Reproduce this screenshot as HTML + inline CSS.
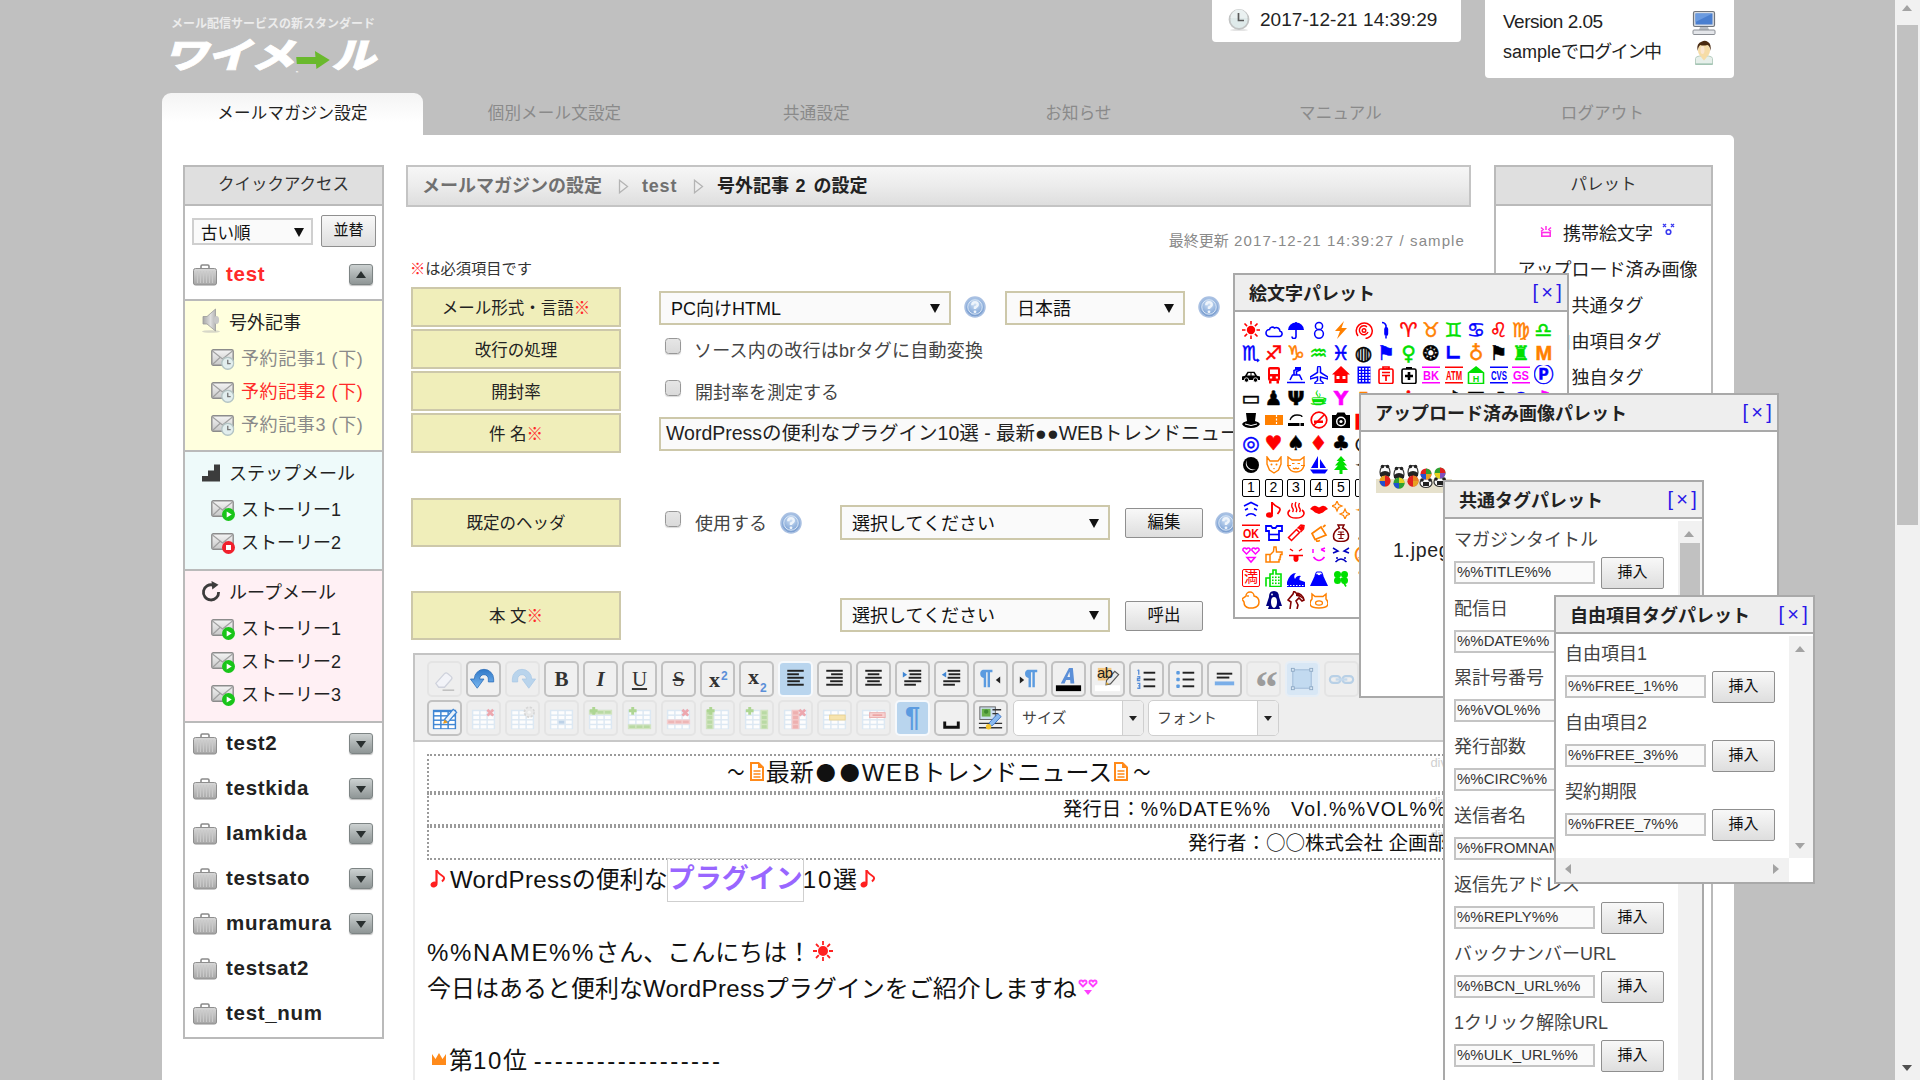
<!DOCTYPE html>
<html lang="ja">
<head>
<meta charset="utf-8">
<title>ワイメール - 号外記事 2 の設定</title>
<style>
*{box-sizing:border-box;margin:0;padding:0}
html,body{width:1920px;height:1080px;overflow:hidden}
body{background:#c0c0c0;font-family:"Liberation Sans","Noto Sans CJK JP",sans-serif;font-size:18px;color:#222;position:relative}
.abs{position:absolute}
.nw{white-space:nowrap}
/* header */
#tagline{left:171px;top:14px;font-size:12px;font-weight:700;color:#ececec;letter-spacing:0;line-height:20px}
#logo{-webkit-text-stroke:.8px #fff;left:160px;top:31.5px;font-size:35px;font-weight:900;color:#fff;line-height:48px;letter-spacing:-1px;transform:skewX(-16deg) scaleX(1.28);transform-origin:0 100%}
#logo .ar{display:inline-block;position:relative;width:29px;height:30px;font-size:1px;color:transparent;vertical-align:-4px;transform:skewX(16deg)}
#logo .ar:before{content:"";position:absolute;left:1px;top:9px;width:17px;height:7px;background:#6ab92d}
#logo .ar:after{content:"";position:absolute;left:16px;top:3px;border:9.5px solid transparent;border-left:11px solid #6ab92d;border-right:0}
.topbox{background:#fff;border-radius:0 0 4px 4px}
#clockbox{left:1212px;top:0;width:249px;height:42px}
#verbox{left:1485px;top:0;width:249px;height:78px}
/* nav */
.tab{top:93px;width:261px;height:42px;text-align:center;font-size:16.5px;line-height:40px;letter-spacing:.2px;color:#8a8a8a}
.tab.on{background:linear-gradient(#f4f4f4,#fff 70%);border-radius:9px 9px 0 0;color:#222}
#main{left:162px;top:135px;width:1572px;height:960px;background:#fff;border-radius:0 5px 0 0}

/* sidebar */
#side{left:183px;top:165px;width:201px;height:874px;border:2px solid #bababa;background:#fff}
.bhead{position:absolute;left:0;top:0;right:0;height:39px;background:#dfdfdf;border-bottom:2px solid #bababa;text-align:center;font-size:16.5px;line-height:34px;color:#333}
.sel{position:absolute;border:2px solid #cfcfcf;background:#fafafa;font-size:16.5px;line-height:1;white-space:nowrap;color:#111;overflow:hidden}
.sel .tx{position:absolute;left:7px;top:50%;transform:translateY(-42%)}
.sel .dn{position:absolute;right:7px;top:50%;margin-top:-4px;border:5px solid transparent;border-top:9px solid #111;border-bottom:0}
.sel.k{border-color:#cdc8aa}
.btn{position:absolute;border:1px solid #8f8f8f;background:linear-gradient(#f8f8f8,#dedede);text-align:center;font-size:15px;white-space:nowrap;color:#111;border-radius:2px}
.sec{position:absolute;left:0;right:0;border-top:2px solid #bababa}
.srow{position:absolute;left:0;right:0;height:30px;line-height:32px;white-space:nowrap;font-size:18px;color:#222}
.srow .y{letter-spacing:.6px}
.srow svg{position:absolute}
.mg{position:absolute;left:0;right:0;height:30px;line-height:30px;font-size:20.5px;letter-spacing:.7px;font-weight:700;color:#222;white-space:nowrap}
.mg .nm{position:absolute;left:41px;top:-1px}
.tg{position:absolute;left:164px;top:4px;width:24px;height:21px;border-radius:3px;background:linear-gradient(#ccd1d1,#a9afaf 55%,#8f9696);border:1px solid #7d8484;box-shadow:0 1px 1px rgba(0,0,0,.25)}
.tg i{position:absolute;left:6px;top:7px;border:5px solid transparent}
.tg.up i{border-bottom:7px solid #2a3030;border-top:0;top:6px}
.tg.dn i{border-top:7px solid #2a3030;border-bottom:0}

/* crumb */
#crumb{left:406px;top:165px;width:1065px;height:42px;border:2px solid #c4c4c4;background:linear-gradient(#f6f6f6,#ededed 45%,#dedede);font-size:18px;font-weight:700;line-height:39px;color:#707070;white-space:nowrap}
#crumb>span{position:absolute;top:0}
.ctri{position:absolute;top:12px;width:11px;height:15px}
/* form */
.lab{position:absolute;left:411px;width:210px;background:#f0eeba;border:2px solid #cdc8aa;text-align:center;font-size:16.5px;color:#222;white-space:nowrap}
.red{color:#ff2a2a}
.cb{position:absolute;width:16px;height:16px;border:1.500px solid #979797;border-radius:3.500px;background:linear-gradient(#e6e6e6,#dadada);box-shadow:0 1px 1px rgba(0,0,0,.15)}
.ft{position:absolute;font-size:18px;line-height:24px;white-space:nowrap;color:#444}
.hp{position:absolute;width:22px;height:22px}

/* editor */
#ed{left:413px;top:653px;width:1056px;height:440px;border:2px solid #c4c4c4;border-bottom:0;background:#fff}
#tb{position:absolute;left:0;top:0;right:0;height:87px;background:#eee;border-bottom:2px solid #c8c8c8}
.tbb{position:absolute;width:35px;height:36px;border:2px solid #c2c2c2;border-radius:5px;background:#f0f0f0;text-align:center;color:#333;font-family:"Liberation Serif",serif;font-weight:700;font-size:21px;line-height:32px}
.tbb.dis{border-color:#e4e4e4;background:#eee}
.tbb.blu{background:#d8e7f5;border-color:#e6eef6}
.tbb.act{background:#b9d5ee;border-color:#f6f9fc}
.tbb svg{position:absolute;left:0;top:1px;width:31px;height:31px}
.tbd{position:absolute;top:45px;height:36px;border:1.500px solid #cfcfcf;border-radius:5px;background:#fff;font-size:15px;line-height:33px;color:#444;white-space:nowrap;overflow:hidden}
.tbd span{position:absolute;left:8px;top:0}
.tbd b{position:absolute;right:0;top:0;bottom:0;width:21px;background:#eee;border-left:1.500px solid #cfcfcf}
.tbd b:after{content:"";position:absolute;left:6px;top:15px;border:4px solid transparent;border-top:5px solid #222;border-bottom:0}
#doc{position:absolute;left:0;top:86px;right:0;bottom:0;font-size:24px;line-height:36px;color:#111;white-space:nowrap}
.dv{position:absolute;left:12px;width:1024px;border:2px dotted #9a9a9a}
.dv u{position:absolute;right:2px;top:0;font-size:13px;line-height:14px;color:#d0d0d0;text-decoration:none}
.ln{position:absolute;left:12px;height:36px}
.em{display:inline-block;vertical-align:middle;position:relative}
.la{letter-spacing:.07em}
.dot{display:inline-block;width:24px;text-align:center;font-family:"Noto Sans CJK JP",sans-serif;font-size:20px;vertical-align:top}
.tld{display:inline-block;width:24px;text-align:center;transform:scale(.72,.9)}

/* palette */
#pal{left:1494px;top:165px;width:219px;height:930px;border:2px solid #bababa;background:#fff}
#pal .it{position:absolute;left:8px;right:0;text-align:center;font-size:18px;line-height:26px;white-space:nowrap;color:#222}
.fp{position:absolute;border:2px solid #a9a9a9;background:#fff}
.fp .hd{position:absolute;left:0;top:0;right:0;height:37px;background:#eee;border-bottom:2px solid #a9a9a9;font-size:18px;font-weight:700;line-height:38px;color:#222;white-space:nowrap}
.fp .hd span{position:absolute;left:14px}
.fp .hd a{position:absolute;right:2px;top:-2px;color:#2a18e8;font-weight:400;font-size:20px;letter-spacing:3.200px}
.tl{position:absolute;font-size:18px;line-height:24px;color:#444;white-space:nowrap}
.ti{position:absolute;height:23px;border:2px solid #c4c4c4;background:#fafafa;font-size:15px;line-height:18px;color:#333;white-space:nowrap;overflow:hidden;padding-left:1px;letter-spacing:0}
.ib{position:absolute;width:63px;height:32px;border:1px solid #8f8f8f;background:linear-gradient(#f8f8f8,#dedede);text-align:center;font-size:15px;line-height:27px;color:#111;border-radius:2px}
.vsb{position:absolute;width:24px;background:#f1f1f1}
.eg{position:absolute;left:7px;top:46px;width:320px}
.e{position:absolute;width:20px;height:20px;margin:-1px;overflow:hidden;text-align:center;font:700 20px/20px "DejaVu Sans","Noto Sans CJK JP",sans-serif;-webkit-text-stroke:.5px currentColor}
/* scrollbar */
#sb{left:1895px;top:0;width:25px;height:1080px;background:#f1f1f1}
#sb .th{position:absolute;left:2px;top:25px;width:21px;height:500px;background:#c1c1c1}
.tri{position:absolute;width:0;height:0;border:5.5px solid transparent}
</style>
</head>
<body>
<!-- header -->
<div id="tagline" class="abs nw">メール配信サービスの新スタンダード</div>
<div id="logo" class="abs nw">ワイメ<span class="ar">→</span>ル</div>
<div id="clockbox" class="abs topbox"><svg class="abs" style="left:16px;top:9px" width="22" height="22" viewBox="0 0 22 22"><ellipse cx="11" cy="21" rx="9" ry="1.200" fill="#e4e4e4"/><circle cx="11" cy="10.500" r="9.500" fill="#dfeaea" stroke="#c2c4c4" stroke-width="1.800"/><path d="M2.500 9a8.500 8.500 0 0 1 17 0z" fill="#eaf1f1"/><path d="M10.500 4V11.500H16" fill="none" stroke="#5a5a5a" stroke-width="1.700"/></svg><span class="abs nw" style="left:48px;top:8px;font-size:19px;line-height:24px;letter-spacing:.05px;color:#222">2017-12-21 14:39:29</span></div>
<div id="verbox" class="abs topbox"><span class="abs nw" style="left:18px;top:9.500px;font-size:19px;line-height:24px;letter-spacing:-.5px;color:#222">Version 2.05</span><span class="abs nw" style="left:18px;top:40px;font-size:18px;line-height:24px;color:#222">sample<span style="letter-spacing:-1.400px">でログイン中</span></span>
<svg class="abs" style="left:206px;top:10px" width="26" height="26" viewBox="0 0 26 26"><rect x="2.500" y="1.500" width="21" height="15" rx="1.500" fill="#d8dce2" stroke="#70757c" stroke-width="1.200"/><rect x="4.500" y="3.500" width="17" height="11" fill="#4a7fd0"/><path d="M4.500 3.500h17L4.500 12z" fill="#6b9be0"/><path d="M9 17h8l1 3H8z" fill="#b8bcc2"/><rect x="2" y="20" width="22" height="4.500" rx="1" fill="#e4e6ea" stroke="#8a8e94" stroke-width="1"/></svg>
<svg class="abs" style="left:208px;top:40px" width="22" height="26" viewBox="0 0 22 26"><path d="M2.500 24.500v-6q0-2 4-2.500h9q4 .5 4 2.500v6z" fill="#e6efea" stroke="#b9cfc2" stroke-width="1"/><path d="M2.500 23.500h17v1h-17z" fill="#8fb8a4"/><ellipse cx="11" cy="10.500" rx="6" ry="7" fill="#f6dca6"/><ellipse cx="9.500" cy="10" rx="2" ry="4" fill="#fbe6d0"/><path d="M4.500 11Q3 3 9 1.500q3-1.500 6 .5 3.500 2 2.500 9-.5-5-3-6-5 1-7 0-2 1-3 6z" fill="#4a2a10"/><path d="M8 17l3 3.500 3-3.500z" fill="#f6dca6"/></svg></div>
<!-- nav -->
<div class="abs tab on" style="left:162px">メールマガジン設定</div>
<div class="abs tab" style="left:424px">個別メール文設定</div>
<div class="abs tab" style="left:686px">共通設定</div>
<div class="abs tab" style="left:948px">お知らせ</div>
<div class="abs tab" style="left:1210px">マニュアル</div>
<div class="abs tab" style="left:1472px">ログアウト</div>
<div id="main" class="abs"></div>
<svg width="0" height="0" style="position:absolute">
<defs>
<linearGradient id="gcase" x1="0" y1="0" x2="0" y2="1"><stop offset="0" stop-color="#d8d8d8"/><stop offset="1" stop-color="#a4a4a4"/></linearGradient>
<linearGradient id="gmail" x1="0" y1="0" x2="0" y2="1"><stop offset="0" stop-color="#f4f4f4"/><stop offset="1" stop-color="#c8c8c8"/></linearGradient>
<radialGradient id="ghelp" cx="0.5" cy="0.35" r="0.7"><stop offset="0" stop-color="#cfe0f4"/><stop offset="0.6" stop-color="#8fb0dc"/><stop offset="1" stop-color="#6f94c8"/></radialGradient>
<symbol id="case" viewBox="0 0 24 22"><path d="M8 4.5V2.2Q8 1 9.2 1h5.6Q16 1 16 2.2V4.5" fill="none" stroke="#8a8a8a" stroke-width="1.6"/><rect x="0.5" y="4.5" width="23" height="16.5" rx="2" fill="url(#gcase)" stroke="#8e8e8e"/><path d="M4.5 7v12M7.5 7v12M10.5 7v12M13.5 7v12M16.5 7v12M19.5 7v12" stroke="#c9c9c9" stroke-width="1.2"/></symbol>
<symbol id="mail" viewBox="0 0 24 24"><rect x="0.8" y="2.8" width="21.4" height="15.4" rx="1.5" fill="url(#gmail)" stroke="#8c8c8c" stroke-width="1.4"/><path d="M1.5 4l10 8 10-8M1.5 17.5l7.5-7M21.500 17.5l-7.5-7" fill="none" stroke="#a0a0a0" stroke-width="1.2"/></symbol>
<symbol id="bclock" viewBox="0 0 12 12"><circle cx="6" cy="6" r="5.300" fill="#e2eeee" stroke="#b4c4c4" stroke-width="1.200"/><path d="M6 2.8V6.3H8.6" fill="none" stroke="#777" stroke-width="1.2"/></symbol>
<symbol id="bplay" viewBox="0 0 12 12"><circle cx="6" cy="6" r="6" fill="#19c519"/><path d="M4.3 3.2L9 6 4.3 8.800z" fill="#fff"/></symbol>
<symbol id="bstop" viewBox="0 0 12 12"><circle cx="6" cy="6" r="6" fill="#f0202c"/><rect x="3.7" y="3.7" width="4.6" height="4.6" fill="#fff"/></symbol>
<symbol id="help" viewBox="0 0 22 22"><circle cx="11" cy="11" r="10" fill="url(#ghelp)" stroke="#a9c0e2" stroke-width="1.5"/><circle cx="11" cy="11" r="7.2" fill="none" stroke="#d8e5f5" stroke-width="1"/><path d="M8.300 9.200Q8.300 6.300 11 6.300T13.700 8.800Q13.700 10.300 11 11.500V13" fill="none" stroke="#eef4fb" stroke-width="2.500"/><circle cx="11" cy="15.800" r="1.400" fill="#eef4fb"/></symbol>
</defs></svg>
<!-- sidebar -->
<div id="side" class="abs">
<div class="bhead">クイックアクセス</div>
<div class="sel" style="left:7px;top:51px;width:121px;height:27px"><span class="tx">古い順</span><i class="dn"></i></div>
<div class="btn" style="left:136px;top:48px;width:55px;height:32px;line-height:27px">並替</div>
<div class="mg" style="top:93px;color:#ff2a2a"><svg class="abs" style="left:8px;top:4px" width="24" height="22"><use href="#case"/></svg><span class="nm">test</span><span class="tg up"><i></i></span></div>
<div class="sec" style="top:132px;height:151px;background:#ffffde">
 <div class="srow" style="top:6px"><svg style="left:16px;top:1px" width="24" height="26" viewBox="0 0 24 26"><defs><linearGradient id="gsp" x1="0" y1="0" x2="1" y2="0"><stop offset="0" stop-color="#a8a8a8"/><stop offset=".6" stop-color="#dedede"/><stop offset="1" stop-color="#b4b4b4"/></linearGradient></defs><ellipse cx="10" cy="23.500" rx="9" ry="1.300" fill="#d8d8c8"/><path d="M2 8.500h4L14.500 1v22L6 16H2z" fill="url(#gsp)" stroke="#9a9a9a" stroke-width=".8"/><ellipse cx="15.500" cy="12" rx="2.600" ry="4" fill="#c8c8c8"/></svg><span class="abs" style="left:44px">号外記事</span></div>
 <div class="srow" style="top:42px;color:#8a8a8a"><svg style="left:26px;top:4px" width="24" height="24"><use href="#mail"/><use href="#bclock" x="10" y="9.500" width="13.500" height="13.500"/></svg><span class="abs y" style="left:56px">予約記事1 (下)</span></div>
 <div class="srow" style="top:75px;color:#ff2a2a"><svg style="left:26px;top:4px" width="24" height="24"><use href="#mail"/><use href="#bclock" x="10" y="9.500" width="13.500" height="13.500"/></svg><span class="abs y" style="left:56px">予約記事2 (下)</span></div>
 <div class="srow" style="top:108px;color:#8a8a8a"><svg style="left:26px;top:4px" width="24" height="24"><use href="#mail"/><use href="#bclock" x="10" y="9.500" width="13.500" height="13.500"/></svg><span class="abs y" style="left:56px">予約記事3 (下)</span></div>
</div>
<div class="sec" style="top:283px;height:119px;background:#eefafa">
 <div class="srow" style="top:6px"><svg style="left:16px;top:6px" width="20" height="18" viewBox="0 0 20 18"><path d="M1 17.500V12h6V6.500h6V0.500h6v17z" fill="#3c3c3c"/></svg><span class="abs" style="left:44px">ステップメール</span></div>
 <div class="srow" style="top:42px"><svg style="left:26px;top:4px" width="24" height="24"><use href="#mail"/><use href="#bplay" x="11" y="10" width="13" height="13"/></svg><span class="abs" style="left:56px">ストーリー1</span></div>
 <div class="srow" style="top:75px"><svg style="left:26px;top:4px" width="24" height="24"><use href="#mail"/><use href="#bstop" x="11" y="10" width="13" height="13"/></svg><span class="abs" style="left:56px">ストーリー2</span></div>
</div>
<div class="sec" style="top:402px;height:152px;background:#fff0f4">
 <div class="srow" style="top:6px"><svg style="left:15px;top:4px" width="22" height="22" viewBox="0 0 22 22"><path d="M13.500 4.200A7.600 7.600 0 1 0 18.600 11" fill="none" stroke="#3c3c3c" stroke-width="2.800"/><path d="M11.500 0l7 3.800-6.200 4.700z" fill="#3c3c3c"/></svg><span class="abs" style="left:44px">ループメール</span></div>
 <div class="srow" style="top:42px"><svg style="left:26px;top:4px" width="24" height="24"><use href="#mail"/><use href="#bplay" x="11" y="10" width="13" height="13"/></svg><span class="abs" style="left:56px">ストーリー1</span></div>
 <div class="srow" style="top:75px"><svg style="left:26px;top:4px" width="24" height="24"><use href="#mail"/><use href="#bplay" x="11" y="10" width="13" height="13"/></svg><span class="abs" style="left:56px">ストーリー2</span></div>
 <div class="srow" style="top:108px"><svg style="left:26px;top:4px" width="24" height="24"><use href="#mail"/><use href="#bplay" x="11" y="10" width="13" height="13"/></svg><span class="abs" style="left:56px">ストーリー3</span></div>
</div>
<div class="sec" style="top:554px;height:316px;background:#fff">
 <div class="mg" style="top:6px"><svg class="abs" style="left:8px;top:4px" width="24" height="22"><use href="#case"/></svg><span class="nm">test2</span><span class="tg dn"><i></i></span></div>
 <div class="mg" style="top:51px"><svg class="abs" style="left:8px;top:4px" width="24" height="22"><use href="#case"/></svg><span class="nm">testkida</span><span class="tg dn"><i></i></span></div>
 <div class="mg" style="top:96px"><svg class="abs" style="left:8px;top:4px" width="24" height="22"><use href="#case"/></svg><span class="nm">Iamkida</span><span class="tg dn"><i></i></span></div>
 <div class="mg" style="top:141px"><svg class="abs" style="left:8px;top:4px" width="24" height="22"><use href="#case"/></svg><span class="nm">testsato</span><span class="tg dn"><i></i></span></div>
 <div class="mg" style="top:186px"><svg class="abs" style="left:8px;top:4px" width="24" height="22"><use href="#case"/></svg><span class="nm">muramura</span><span class="tg dn"><i></i></span></div>
 <div class="mg" style="top:231px"><svg class="abs" style="left:8px;top:4px" width="24" height="22"><use href="#case"/></svg><span class="nm">testsat2</span></div>
 <div class="mg" style="top:276px"><svg class="abs" style="left:8px;top:4px" width="24" height="22"><use href="#case"/></svg><span class="nm">test_num</span></div>
</div>
</div>

<!-- breadcrumb -->
<div id="crumb" class="abs"><span style="left:14px">メールマガジンの設定</span><svg class="ctri" style="left:210px" viewBox="0 0 11 15"><path d="M1.500 1.200L9.500 7.500 1.500 13.800z" fill="#eee" stroke="#b4b4b4" stroke-width="1.300"/></svg><span style="left:234px;letter-spacing:.8px">test</span><svg class="ctri" style="left:285px" viewBox="0 0 11 15"><path d="M1.500 1.200L9.500 7.500 1.500 13.800z" fill="#eee" stroke="#b4b4b4" stroke-width="1.300"/></svg><span style="left:309px;color:#222">号外記事<span style="letter-spacing:1.500px"> 2 </span>の設定</span></div>

<!-- form -->
<div class="abs nw" style="left:1100px;top:231px;width:1365px;font-size:15px;line-height:20px;color:#8a8a8a;width:365px;text-align:right;">最終更新<span style="letter-spacing:1.100px"> 2017-12-21 14:39:27 / sample</span></div>
<div class="abs nw" style="left:410px;top:259px;font-size:15.250px;line-height:20px;color:#333"><span class="red">※</span>は必須項目です</div>
<div class="lab" style="top:287px;height:40px;line-height:38px">メール形式・言語<span class="red">※</span></div>
<div class="lab" style="top:329px;height:40px;line-height:38px">改行の処理</div>
<div class="lab" style="top:371px;height:40px;line-height:38px">開封率</div>
<div class="lab" style="top:413px;height:40px;line-height:38px">件 名<span class="red">※</span></div>
<div class="lab" style="top:498px;height:49px;line-height:46px">既定のヘッダ</div>
<div class="lab" style="top:591px;height:49px;line-height:46px">本 文<span class="red">※</span></div>
<div class="sel k" style="left:659px;top:291px;width:292px;height:34px;font-size:18px"><span class="tx" style="left:10px">PC向けHTML</span><i class="dn" style="right:9px"></i></div>
<svg class="hp" style="left:964px;top:296px"><use href="#help"/></svg>
<div class="sel k" style="left:1005px;top:291px;width:180px;height:34px;font-size:18px"><span class="tx" style="left:10px">日本語</span><i class="dn" style="right:9px"></i></div>
<svg class="hp" style="left:1198px;top:296px"><use href="#help"/></svg>
<div class="cb" style="left:665px;top:338px"></div><div class="ft" style="left:694px;top:339px;letter-spacing:.25px">ソース内の改行はbrタグに自動変換</div>
<div class="cb" style="left:665px;top:380px"></div><div class="ft" style="left:695px;top:381px">開封率を測定する</div>
<div class="abs nw" style="left:659px;top:417px;width:806px;height:34px;border:2px solid #cdc8aa;background:#fafafa;font-size:19.500px;line-height:28px;padding-left:5px;overflow:hidden;color:#222">WordPressの便利なプラグイン10選 - 最新●●WEBトレンドニュース</div>
<div class="cb" style="left:665px;top:511px"></div><div class="ft" style="left:695px;top:512px">使用する</div>
<svg class="hp" style="left:780px;top:512px"><use href="#help"/></svg>
<div class="sel k" style="left:840px;top:505px;width:270px;height:35px;font-size:18px"><span class="tx" style="left:10px">選択してください</span><i class="dn" style="right:9px"></i></div>
<div class="btn" style="left:1125px;top:508px;width:78px;height:30px;line-height:26px;font-size:16.500px">編集</div>
<svg class="hp" style="left:1215px;top:512px"><use href="#help"/></svg>
<div class="sel k" style="left:840px;top:598px;width:270px;height:34px;font-size:18px"><span class="tx" style="left:10px">選択してください</span><i class="dn" style="right:9px"></i></div>
<div class="btn" style="left:1125px;top:601px;width:78px;height:30px;line-height:26px;font-size:16.500px">呼出</div>

<!-- editor -->
<div id="ed" class="abs"><div id="tb"><div class="tbb dis" style="left:12px;top:6px"><svg viewBox="0 0 32 32"><path d="M7 20l9-10q1.500-1.500 3.500 0l3.500 3q1.500 1.500 0 3l-7 8h-6z" fill="#f2f3f8" stroke="#cfd2dc" stroke-width="1.300"/><path d="M14 27h12" stroke="#b4b4b4" stroke-width="1.300"/></svg></div><div class="tbb " style="left:51px;top:6px"><svg viewBox="0 0 32 32"><defs><linearGradient id="gun" x1="0" y1="0" x2="0" y2="1"><stop offset="0" stop-color="#2f78c8"/><stop offset="1" stop-color="#7ab8f0"/></linearGradient></defs><path d="M26.500 18.500V15.500A10 10 0 0 0 6.500 15.500H2.500L9.500 25 16.500 15.500H12A4.500 4.500 0 0 1 21 15.500V18.500z" fill="url(#gun)" stroke="#2a6cb8" stroke-width=".8"/></svg></div><div class="tbb dis" style="left:90px;top:6px"><svg viewBox="0 0 32 32"><path d="M5.500 18.500V15.500A10 10 0 0 1 25.500 15.500H29.500L22.500 25 15.500 15.500H20A4.500 4.500 0 0 0 11 15.500V18.500z" fill="#b9d4ec" stroke="#a9c8e6" stroke-width=".8"/></svg></div><div class="tbb " style="left:129px;top:6px">B</div><div class="tbb " style="left:168px;top:6px"><i>I</i></div><div class="tbb " style="left:207px;top:6px"><span style="font-weight:400;text-decoration:underline;font-size:21px">U</span></div><div class="tbb " style="left:246px;top:6px"><span style="font-weight:400;text-decoration:line-through;font-size:21px">S</span></div><div class="tbb " style="left:285px;top:6px"><span style="font-size:22px;position:relative;left:-3px;top:1px">x<span style="position:absolute;font-size:12px;font-weight:700;color:#5b8fd8;top:-7px;left:12px;font-family:'Liberation Sans',sans-serif">2</span></span></div><div class="tbb " style="left:324px;top:6px"><span style="font-size:22px;position:relative;left:-3px;top:-2px">x<span style="position:absolute;font-size:12px;font-weight:700;color:#5b8fd8;top:8px;left:12px;font-family:'Liberation Sans',sans-serif">2</span></span></div><div class="tbb act" style="left:363px;top:6px"><svg viewBox="0 0 32 32"><rect x="7.5" y="6" width="17" height="2" fill="#222"/><rect x="7.5" y="9.6" width="12" height="2" fill="#222"/><rect x="7.5" y="13.2" width="17" height="2" fill="#222"/><rect x="7.5" y="16.8" width="13" height="2" fill="#222"/><rect x="7.5" y="20.4" width="17" height="2" fill="#222"/></svg></div><div class="tbb " style="left:402px;top:6px"><svg viewBox="0 0 32 32"><rect x="7.5" y="6" width="17" height="2" fill="#222"/><rect x="12.5" y="9.6" width="12" height="2" fill="#222"/><rect x="7.5" y="13.2" width="17" height="2" fill="#222"/><rect x="11.5" y="16.8" width="13" height="2" fill="#222"/><rect x="7.5" y="20.4" width="17" height="2" fill="#222"/></svg></div><div class="tbb " style="left:441px;top:6px"><svg viewBox="0 0 32 32"><rect x="7.5" y="6" width="17" height="2" fill="#222"/><rect x="10" y="9.6" width="12" height="2" fill="#222"/><rect x="7.5" y="13.2" width="17" height="2" fill="#222"/><rect x="9.5" y="16.8" width="13" height="2" fill="#222"/><rect x="7.5" y="20.4" width="17" height="2" fill="#222"/></svg></div><div class="tbb " style="left:480px;top:6px"><svg viewBox="0 0 32 32"><path d="M6 8l4.500 3L6 14z" fill="#3f86d4"/><rect x="12" y="6" width="13" height="2" fill="#222"/><rect x="13" y="9.600" width="12" height="2" fill="#222"/><rect x="12" y="13.200" width="13" height="2" fill="#222"/><rect x="7.500" y="16.800" width="17.500" height="2" fill="#222"/><rect x="7.500" y="20.400" width="12" height="2" fill="#222"/></svg></div><div class="tbb " style="left:519px;top:6px"><svg viewBox="0 0 32 32"><path d="M10.500 8L6 11l4.500 3z" fill="#3f86d4"/><rect x="12" y="6" width="13" height="2" fill="#222"/><rect x="13" y="9.600" width="12" height="2" fill="#222"/><rect x="12" y="13.200" width="13" height="2" fill="#222"/><rect x="7.500" y="16.800" width="17.500" height="2" fill="#222"/><rect x="7.500" y="20.400" width="12" height="2" fill="#222"/></svg></div><div class="tbb " style="left:558px;top:6px"><svg viewBox="0 0 32 32"><path d="M8 6h10v2.500h-2.500V24H13V8.500h-1.500V24H9V14.500A4.500 4.500 0 0 1 8 6z" fill="#5b9be0"/><path d="M26 13v7l-4.500-3.500z" fill="#222"/></svg></div><div class="tbb " style="left:597px;top:6px"><svg viewBox="0 0 32 32"><path d="M14 6h10v2.500h-2.500V24H19V8.500h-1.500V24H15V14.500A4.500 4.500 0 0 1 14 6z" fill="#5b9be0"/><path d="M6 13v7l4.500-3.500z" fill="#222"/></svg></div><div class="tbb " style="left:636px;top:6px"><svg viewBox="0 0 32 32"><path d="M8 20L16.500 4h4L22 20h-4l-.3-3.500H13.500L12 20zM14.800 13.500h2.700L17 8z" fill="#5b8fd8"/><rect x="3" y="22" width="26" height="6" fill="#000"/></svg></div><div class="tbb " style="left:675px;top:6px"><svg viewBox="0 0 32 32"><rect x="6" y="4" width="14" height="13" fill="#f4c880"/><rect x="3" y="22" width="26" height="6" fill="#fff"/><path d="M15 17l8.500-9.500 4 3.500-8.500 9.500-4.500 1z" fill="#e8e8e8" stroke="#555" stroke-width="1.200"/><path d="M14.500 21.500l3-.6-2.400-2.400z" fill="#e8b030"/></svg><span style="position:absolute;left:5px;top:2px;font:400 15px/15px 'Liberation Sans',sans-serif;color:#222;letter-spacing:-.5px">ab</span></div><div class="tbb " style="left:714px;top:6px"><svg viewBox="0 0 32 32"><rect x="13" y="8" width="12" height="2" fill="#222"/><rect x="13" y="15" width="12" height="2" fill="#222"/><rect x="13" y="22" width="12" height="2" fill="#222"/><path d="M8 6v5M6.800 7l1.200-1M6.500 13h2.500v2H6.700v2H9.500M6.500 20H9v2.500H7.500 9V25H6.500" fill="none" stroke="#5b8fd8" stroke-width="1.400"/></svg></div><div class="tbb " style="left:753px;top:6px"><svg viewBox="0 0 32 32"><rect x="13" y="8" width="12" height="2" fill="#222"/><rect x="13" y="15" width="12" height="2" fill="#222"/><rect x="13" y="22" width="12" height="2" fill="#222"/><rect x="6.500" y="7.200" width="3.600" height="3.600" rx="1" fill="#5b9be0"/><rect x="6.500" y="14.200" width="3.600" height="3.600" rx="1" fill="#5b9be0"/><rect x="6.500" y="21.200" width="3.600" height="3.600" rx="1" fill="#5b9be0"/></svg></div><div class="tbb " style="left:792px;top:6px"><svg viewBox="0 0 32 32"><rect x="8" y="9" width="16" height="2" fill="#222"/><rect x="8" y="13" width="13" height="2" fill="#222"/><rect x="6" y="18" width="20" height="4" fill="#7aaee8"/></svg></div><div class="tbb dis" style="left:831px;top:6px"><span style="font-size:46px;color:#9c9c9c;position:absolute;left:7px;top:10px;line-height:30px">“</span></div><div class="tbb dis blu" style="left:870px;top:6px"><svg viewBox="0 0 32 32"><rect x="6" y="6" width="19" height="19" fill="#c2daf0" stroke="#9db9d6" stroke-width="1"/><g fill="#d8e7f5" stroke="#8aa6c2" stroke-width=".9"><rect x="4.500" y="4.500" width="3" height="3"/><rect x="23.500" y="4.500" width="3" height="3"/><rect x="4.500" y="23.500" width="3" height="3"/><rect x="23.500" y="23.500" width="3" height="3"/></g></svg></div><div class="tbb dis" style="left:909px;top:6px"><svg viewBox="0 0 32 32"><rect x="4" y="12.500" width="11" height="7" rx="3.500" fill="none" stroke="#b8d0e6" stroke-width="2.200"/><rect x="17" y="12.500" width="11" height="7" rx="3.500" fill="none" stroke="#b8d0e6" stroke-width="2.200"/><rect x="10" y="14.800" width="12" height="2.400" fill="#c4d9ec"/></svg></div><div class="tbb " style="left:12px;top:45px"><svg viewBox="0 0 32 32"><rect x="4" y="7" width="24" height="20" fill="#3f86d4"/><rect x="5.5" y="9.5" width="6" height="3" fill="#fff"/><rect x="13" y="9.5" width="6" height="3" fill="#fff"/><rect x="20.5" y="9.5" width="6" height="3" fill="#fff"/><rect x="5.5" y="14" width="6" height="3" fill="#fff"/><rect x="13" y="14" width="6" height="3" fill="#fff"/><rect x="20.5" y="14" width="6" height="3" fill="#fff"/><rect x="5.5" y="18.5" width="6" height="3" fill="#fff"/><rect x="13" y="18.5" width="6" height="3" fill="#fff"/><rect x="20.5" y="18.5" width="6" height="3" fill="#fff"/><rect x="5.5" y="23" width="6" height="3" fill="#fff"/><rect x="13" y="23" width="6" height="3" fill="#fff"/><rect x="20.5" y="23" width="6" height="3" fill="#fff"/><path d="M16 17l9-10.500 3.500 3-9 10.500z" fill="#eaf2fb" stroke="#3f86d4" stroke-width="1.300"/><path d="M14.500 21.500l5-1.500-3.500-3z" fill="#e89a20"/></svg></div><div class="tbb dis" style="left:51px;top:45px"><svg viewBox="0 0 32 32" opacity=".9"><rect x="4" y="7" width="24" height="20" fill="#dbe8f4"/><rect x="5.5" y="8.5" width="6" height="3.300" fill="#fff"/><rect x="13" y="8.5" width="6" height="3.300" fill="#fff"/><rect x="20.5" y="8.5" width="6" height="3.300" fill="#fff"/><rect x="5.5" y="13.3" width="6" height="3.300" fill="#fff"/><rect x="13" y="13.3" width="6" height="3.300" fill="#fff"/><rect x="20.5" y="13.3" width="6" height="3.300" fill="#fff"/><rect x="5.5" y="18.1" width="6" height="3.300" fill="#fff"/><rect x="13" y="18.1" width="6" height="3.300" fill="#fff"/><rect x="20.5" y="18.1" width="6" height="3.300" fill="#fff"/><rect x="5.5" y="22.9" width="6" height="3.300" fill="#fff"/><rect x="13" y="22.9" width="6" height="3.300" fill="#fff"/><rect x="20.5" y="22.9" width="6" height="3.300" fill="#fff"/><path d="M20 7l6 6M26 7l-6 6" stroke="#eda0a8" stroke-width="2.800"/></svg></div><div class="tbb dis" style="left:90px;top:45px"><svg viewBox="0 0 32 32" opacity=".9"><rect x="4" y="7" width="24" height="20" fill="#dbe8f4"/><rect x="5.5" y="8.5" width="6" height="3.300" fill="#fff"/><rect x="13" y="8.5" width="6" height="3.300" fill="#fff"/><rect x="20.5" y="8.5" width="6" height="3.300" fill="#fff"/><rect x="5.5" y="13.3" width="6" height="3.300" fill="#fff"/><rect x="13" y="13.3" width="6" height="3.300" fill="#fff"/><rect x="20.5" y="13.3" width="6" height="3.300" fill="#fff"/><rect x="5.5" y="18.1" width="6" height="3.300" fill="#fff"/><rect x="13" y="18.1" width="6" height="3.300" fill="#fff"/><rect x="20.5" y="18.1" width="6" height="3.300" fill="#fff"/><rect x="5.5" y="22.9" width="6" height="3.300" fill="#fff"/><rect x="13" y="22.9" width="6" height="3.300" fill="#fff"/><rect x="20.5" y="22.9" width="6" height="3.300" fill="#fff"/><circle cx="23" cy="9.500" r="5" fill="#ececec" stroke="#d4d4d4" stroke-width="1.800" stroke-dasharray="2.400 1.500"/><circle cx="23" cy="9.500" r="3.600" fill="#e8e8e8"/><circle cx="23" cy="9.500" r="1.600" fill="#f6f6f6"/></svg></div><div class="tbb dis" style="left:129px;top:45px"><svg viewBox="0 0 32 32" opacity=".9"><rect x="4" y="7" width="24" height="20" fill="#dbe8f4"/><rect x="5.5" y="8.5" width="6" height="3.300" fill="#fff"/><rect x="13" y="8.5" width="6" height="3.300" fill="#fff"/><rect x="20.5" y="8.5" width="6" height="3.300" fill="#fff"/><rect x="5.5" y="13.3" width="6" height="3.300" fill="#fff"/><rect x="13" y="13.3" width="6" height="3.300" fill="#fff"/><rect x="20.5" y="13.3" width="6" height="3.300" fill="#fff"/><rect x="5.5" y="18.1" width="6" height="3.300" fill="#fff"/><rect x="13" y="18.1" width="6" height="3.300" fill="#fff"/><rect x="20.5" y="18.1" width="6" height="3.300" fill="#fff"/><rect x="5.5" y="22.9" width="6" height="3.300" fill="#fff"/><rect x="13" y="22.9" width="6" height="3.300" fill="#fff"/><rect x="20.5" y="22.9" width="6" height="3.300" fill="#fff"/><rect x="13" y="18.100" width="6" height="3.300" fill="#b8d0e8"/></svg></div><div class="tbb dis" style="left:168px;top:45px"><svg viewBox="0 0 32 32" opacity=".9"><rect x="4" y="7" width="24" height="20" fill="#dbe8f4"/><rect x="5.5" y="8.5" width="6" height="3.300" fill="#fff"/><rect x="13" y="8.5" width="6" height="3.300" fill="#fff"/><rect x="20.5" y="8.5" width="6" height="3.300" fill="#fff"/><rect x="5.5" y="13.3" width="6" height="3.300" fill="#fff"/><rect x="13" y="13.3" width="6" height="3.300" fill="#fff"/><rect x="20.5" y="13.3" width="6" height="3.300" fill="#fff"/><rect x="5.5" y="18.1" width="6" height="3.300" fill="#fff"/><rect x="13" y="18.1" width="6" height="3.300" fill="#fff"/><rect x="20.5" y="18.1" width="6" height="3.300" fill="#fff"/><rect x="5.5" y="22.9" width="6" height="3.300" fill="#fff"/><rect x="13" y="22.9" width="6" height="3.300" fill="#fff"/><rect x="20.5" y="22.9" width="6" height="3.300" fill="#fff"/><rect x="4" y="7" width="24" height="5" fill="#cfe4bc"/><rect x="5.5" y="8.300" width="6" height="2.600" fill="#b4d89c"/><rect x="13" y="8.300" width="6" height="2.600" fill="#b4d89c"/><rect x="20.5" y="8.300" width="6" height="2.600" fill="#b4d89c"/><path d="M9 4v8M5 8h8" stroke="#a8d48a" stroke-width="3"/></svg></div><div class="tbb dis" style="left:207px;top:45px"><svg viewBox="0 0 32 32" opacity=".9"><rect x="4" y="7" width="24" height="20" fill="#dbe8f4"/><rect x="5.5" y="8.5" width="6" height="3.300" fill="#fff"/><rect x="13" y="8.5" width="6" height="3.300" fill="#fff"/><rect x="20.5" y="8.5" width="6" height="3.300" fill="#fff"/><rect x="5.5" y="13.3" width="6" height="3.300" fill="#fff"/><rect x="13" y="13.3" width="6" height="3.300" fill="#fff"/><rect x="20.5" y="13.3" width="6" height="3.300" fill="#fff"/><rect x="5.5" y="18.1" width="6" height="3.300" fill="#fff"/><rect x="13" y="18.1" width="6" height="3.300" fill="#fff"/><rect x="20.5" y="18.1" width="6" height="3.300" fill="#fff"/><rect x="5.5" y="22.9" width="6" height="3.300" fill="#fff"/><rect x="13" y="22.9" width="6" height="3.300" fill="#fff"/><rect x="20.5" y="22.9" width="6" height="3.300" fill="#fff"/><rect x="4" y="22" width="24" height="5" fill="#cfe4bc"/><rect x="5.5" y="23.200" width="6" height="2.600" fill="#b4d89c"/><rect x="13" y="23.200" width="6" height="2.600" fill="#b4d89c"/><rect x="20.5" y="23.200" width="6" height="2.600" fill="#b4d89c"/><path d="M9 4v8M5 8h8" stroke="#a8d48a" stroke-width="3"/></svg></div><div class="tbb dis" style="left:246px;top:45px"><svg viewBox="0 0 32 32" opacity=".9"><rect x="4" y="7" width="24" height="20" fill="#dbe8f4"/><rect x="5.5" y="8.5" width="6" height="3.300" fill="#fff"/><rect x="13" y="8.5" width="6" height="3.300" fill="#fff"/><rect x="20.5" y="8.5" width="6" height="3.300" fill="#fff"/><rect x="5.5" y="13.3" width="6" height="3.300" fill="#fff"/><rect x="13" y="13.3" width="6" height="3.300" fill="#fff"/><rect x="20.5" y="13.3" width="6" height="3.300" fill="#fff"/><rect x="5.5" y="18.1" width="6" height="3.300" fill="#fff"/><rect x="13" y="18.1" width="6" height="3.300" fill="#fff"/><rect x="20.5" y="18.1" width="6" height="3.300" fill="#fff"/><rect x="5.5" y="22.9" width="6" height="3.300" fill="#fff"/><rect x="13" y="22.9" width="6" height="3.300" fill="#fff"/><rect x="20.5" y="22.9" width="6" height="3.300" fill="#fff"/><rect x="4" y="17" width="24" height="5" fill="#f4cccc"/><rect x="5.5" y="18.200" width="6" height="2.600" fill="#eeb0b0"/><rect x="13" y="18.200" width="6" height="2.600" fill="#eeb0b0"/><rect x="20.5" y="18.200" width="6" height="2.600" fill="#eeb0b0"/><path d="M20 7l6 6M26 7l-6 6" stroke="#eda0a8" stroke-width="2.800"/></svg></div><div class="tbb dis" style="left:285px;top:45px"><svg viewBox="0 0 32 32" opacity=".9"><rect x="4" y="7" width="24" height="20" fill="#dbe8f4"/><rect x="5.5" y="8.5" width="6" height="3.300" fill="#fff"/><rect x="13" y="8.5" width="6" height="3.300" fill="#fff"/><rect x="20.5" y="8.5" width="6" height="3.300" fill="#fff"/><rect x="5.5" y="13.3" width="6" height="3.300" fill="#fff"/><rect x="13" y="13.3" width="6" height="3.300" fill="#fff"/><rect x="20.5" y="13.3" width="6" height="3.300" fill="#fff"/><rect x="5.5" y="18.1" width="6" height="3.300" fill="#fff"/><rect x="13" y="18.1" width="6" height="3.300" fill="#fff"/><rect x="20.5" y="18.1" width="6" height="3.300" fill="#fff"/><rect x="5.5" y="22.9" width="6" height="3.300" fill="#fff"/><rect x="13" y="22.9" width="6" height="3.300" fill="#fff"/><rect x="20.5" y="22.9" width="6" height="3.300" fill="#fff"/><rect x="4" y="7" width="8" height="20" fill="#cfe4bc"/><rect x="5.500" y="8.5" width="5" height="3.300" fill="#b4d89c"/><rect x="5.500" y="13.3" width="5" height="3.300" fill="#b4d89c"/><rect x="5.500" y="18.1" width="5" height="3.300" fill="#b4d89c"/><rect x="5.500" y="22.9" width="5" height="3.300" fill="#b4d89c"/><path d="M9 4v8M5 8h8" stroke="#a8d48a" stroke-width="3"/></svg></div><div class="tbb dis" style="left:324px;top:45px"><svg viewBox="0 0 32 32" opacity=".9"><rect x="4" y="7" width="24" height="20" fill="#dbe8f4"/><rect x="5.5" y="8.5" width="6" height="3.300" fill="#fff"/><rect x="13" y="8.5" width="6" height="3.300" fill="#fff"/><rect x="20.5" y="8.5" width="6" height="3.300" fill="#fff"/><rect x="5.5" y="13.3" width="6" height="3.300" fill="#fff"/><rect x="13" y="13.3" width="6" height="3.300" fill="#fff"/><rect x="20.5" y="13.3" width="6" height="3.300" fill="#fff"/><rect x="5.5" y="18.1" width="6" height="3.300" fill="#fff"/><rect x="13" y="18.1" width="6" height="3.300" fill="#fff"/><rect x="20.5" y="18.1" width="6" height="3.300" fill="#fff"/><rect x="5.5" y="22.9" width="6" height="3.300" fill="#fff"/><rect x="13" y="22.9" width="6" height="3.300" fill="#fff"/><rect x="20.5" y="22.9" width="6" height="3.300" fill="#fff"/><rect x="20" y="7" width="8" height="20" fill="#cfe4bc"/><rect x="21.500" y="8.5" width="5" height="3.300" fill="#b4d89c"/><rect x="21.500" y="13.3" width="5" height="3.300" fill="#b4d89c"/><rect x="21.500" y="18.1" width="5" height="3.300" fill="#b4d89c"/><rect x="21.500" y="22.9" width="5" height="3.300" fill="#b4d89c"/><path d="M9 4v8M5 8h8" stroke="#a8d48a" stroke-width="3"/></svg></div><div class="tbb dis" style="left:363px;top:45px"><svg viewBox="0 0 32 32" opacity=".9"><rect x="4" y="7" width="24" height="20" fill="#dbe8f4"/><rect x="5.5" y="8.5" width="6" height="3.300" fill="#fff"/><rect x="13" y="8.5" width="6" height="3.300" fill="#fff"/><rect x="20.5" y="8.5" width="6" height="3.300" fill="#fff"/><rect x="5.5" y="13.3" width="6" height="3.300" fill="#fff"/><rect x="13" y="13.3" width="6" height="3.300" fill="#fff"/><rect x="20.5" y="13.3" width="6" height="3.300" fill="#fff"/><rect x="5.5" y="18.1" width="6" height="3.300" fill="#fff"/><rect x="13" y="18.1" width="6" height="3.300" fill="#fff"/><rect x="20.5" y="18.1" width="6" height="3.300" fill="#fff"/><rect x="5.5" y="22.9" width="6" height="3.300" fill="#fff"/><rect x="13" y="22.9" width="6" height="3.300" fill="#fff"/><rect x="20.5" y="22.9" width="6" height="3.300" fill="#fff"/><rect x="12" y="7" width="8" height="20" fill="#f4c4c4"/><rect x="13.500" y="8.5" width="5" height="3.300" fill="#eeaaaa"/><rect x="13.500" y="13.3" width="5" height="3.300" fill="#eeaaaa"/><rect x="13.500" y="18.1" width="5" height="3.300" fill="#eeaaaa"/><rect x="13.500" y="22.9" width="5" height="3.300" fill="#eeaaaa"/><path d="M20 7l6 6M26 7l-6 6" stroke="#eda0a8" stroke-width="2.800"/></svg></div><div class="tbb dis" style="left:402px;top:45px"><svg viewBox="0 0 32 32" opacity=".9"><rect x="4" y="7" width="24" height="20" fill="#dbe8f4"/><rect x="5.5" y="8.5" width="6" height="3.300" fill="#fff"/><rect x="13" y="8.5" width="6" height="3.300" fill="#fff"/><rect x="20.5" y="8.5" width="6" height="3.300" fill="#fff"/><rect x="5.5" y="13.3" width="6" height="3.300" fill="#fff"/><rect x="13" y="13.3" width="6" height="3.300" fill="#fff"/><rect x="20.5" y="13.3" width="6" height="3.300" fill="#fff"/><rect x="5.5" y="18.1" width="6" height="3.300" fill="#fff"/><rect x="13" y="18.1" width="6" height="3.300" fill="#fff"/><rect x="20.5" y="18.1" width="6" height="3.300" fill="#fff"/><rect x="5.5" y="22.9" width="6" height="3.300" fill="#fff"/><rect x="13" y="22.9" width="6" height="3.300" fill="#fff"/><rect x="20.5" y="22.9" width="6" height="3.300" fill="#fff"/><rect x="11" y="12.500" width="16" height="5" fill="#f8e4a8" stroke="#ecd088"/></svg></div><div class="tbb dis" style="left:441px;top:45px"><svg viewBox="0 0 32 32" opacity=".9"><rect x="4" y="7" width="24" height="20" fill="#dbe8f4"/><rect x="5.5" y="8.5" width="6" height="3.300" fill="#fff"/><rect x="13" y="8.5" width="6" height="3.300" fill="#fff"/><rect x="20.5" y="8.5" width="6" height="3.300" fill="#fff"/><rect x="5.5" y="13.3" width="6" height="3.300" fill="#fff"/><rect x="13" y="13.3" width="6" height="3.300" fill="#fff"/><rect x="20.5" y="13.3" width="6" height="3.300" fill="#fff"/><rect x="5.5" y="18.1" width="6" height="3.300" fill="#fff"/><rect x="13" y="18.1" width="6" height="3.300" fill="#fff"/><rect x="20.5" y="18.1" width="6" height="3.300" fill="#fff"/><rect x="5.5" y="22.9" width="6" height="3.300" fill="#fff"/><rect x="13" y="22.9" width="6" height="3.300" fill="#fff"/><rect x="20.5" y="22.9" width="6" height="3.300" fill="#fff"/><rect x="12" y="10" width="16" height="5" fill="#f8d0d0" stroke="#eca8a8"/><path d="M15 12.500h10" stroke="#e89090" stroke-width="1.400"/></svg></div><div class="tbb act" style="left:480px;top:45px"><span style="font:700 27px/31px 'Liberation Sans',sans-serif;color:#5b9be0">¶</span></div><div class="tbb " style="left:519px;top:45px"><svg viewBox="0 0 32 32"><path d="M9 19v6h14v-6" fill="none" stroke="#111" stroke-width="3"/></svg></div><div class="tbb " style="left:558px;top:45px"><svg viewBox="0 0 32 32"><rect x="5" y="4" width="16" height="13" fill="#cfe0f0" stroke="#666" stroke-width="1"/><rect x="7" y="6" width="9" height="8" fill="#6ab04c"/><circle cx="11.500" cy="9" r="2.200" fill="#3f8a30"/><path d="M4 21h24M4 25.500h24M18 7h9M18 11h6" stroke="#333" stroke-width="1.400"/><path d="M15 20l8.500-9 3.500 3-8.500 9-4 1z" fill="#8abaf0" stroke="#3f76c4" stroke-width="1"/><circle cx="14" cy="24.500" r="2.800" fill="#f4c430"/></svg></div><div class="tbd" style="left:598px;width:131px"><span>サイズ</span><b></b></div><div class="tbd" style="left:733px;width:131px"><span>フォント</span><b></b></div></div><div id="doc"><div class="abs" style="left:-2px;top:1px;width:2px;bottom:0;background:#ececec"></div>
<div class="dv" style="top:13px;height:39px"><u>div</u></div>
<div class="dv" style="top:52px;height:33px"><u>div</u></div>
<div class="dv" style="top:85px;height:34px"><u>div</u></div>
<div class="ln" style="top:14px;width:1024px;text-align:center"><span class="tld">～</span><span class="em" style="width:18px;height:24px;top:-3px"><svg width="14" height="19" viewBox="0 0 14 19" style="position:absolute;left:2px;top:2px"><path d="M1 1h7.500l4.500 4.500V18H1z" fill="#fff" stroke="#ff8a1a" stroke-width="2"/><path d="M8 1v5h5" fill="#ff8a1a"/><path d="M3.500 9h7M3.500 12h7M3.500 15h7" stroke="#ff8a1a" stroke-width="1.600"/></svg></span>最新<span class="dot">●</span><span class="dot">●</span><span class="la">WEB</span>トレンドニュース<span class="em" style="width:18px;height:24px;top:-3px"><svg width="14" height="19" viewBox="0 0 14 19" style="position:absolute;left:2px;top:2px"><path d="M1 1h7.500l4.500 4.500V18H1z" fill="#fff" stroke="#ff8a1a" stroke-width="2"/><path d="M8 1v5h5" fill="#ff8a1a"/><path d="M3.500 9h7M3.500 12h7M3.500 15h7" stroke="#ff8a1a" stroke-width="1.600"/></svg></span><span class="tld">～</span></div>
<div class="ln" style="top:50px;width:1020px;text-align:right;font-size:19.500px">発行日：<span class="la">%%DATE%%</span>　<span class="la">Vol.%%VOL%%</span></div>
<div class="ln" style="top:82.500px;width:1020px;text-align:right;font-size:19.500px">発行者：<span style="font-family:'Noto Sans CJK JP',sans-serif">○○</span>株式会社 企画部</div>
<div class="ln" style="top:118px;height:42px;line-height:42px"><span class="em" style="width:23px;height:24px;top:-3px"><svg width="16" height="20" viewBox="0 0 16 20" style="position:absolute;left:3px;top:2px"><path d="M6.500 1v13.500" stroke="#ff2020" stroke-width="2.200" fill="none"/><path d="M6.500 1.500Q9 5 12.500 7T12 12.500" stroke="#ff2020" stroke-width="2" fill="none"/><ellipse cx="4" cy="15.500" rx="3.500" ry="2.800" fill="#ff2020" transform="rotate(-20 4 15.500)"/></svg></span><span class="la" style="letter-spacing:.4px">WordPress</span>の便利な<span style="color:#9966ff;font-weight:700;font-size:27px;outline:1px solid #cfcfcf;display:inline-block;height:42px;line-height:40px;vertical-align:top">プラグイン</span><span class="la">10</span>選<span class="em" style="width:23px;height:24px;top:-3px"><svg width="16" height="20" viewBox="0 0 16 20" style="position:absolute;left:3px;top:2px"><path d="M6.500 1v13.500" stroke="#ff2020" stroke-width="2.200" fill="none"/><path d="M6.500 1.500Q9 5 12.500 7T12 12.500" stroke="#ff2020" stroke-width="2" fill="none"/><ellipse cx="4" cy="15.500" rx="3.500" ry="2.800" fill="#ff2020" transform="rotate(-20 4 15.500)"/></svg></span></div>
<div class="ln" style="top:193.500px"><span class="la">%%NAME%%</span>さん、こんにちは！<span class="em" style="width:22px;height:24px;top:-3px"><svg width="20" height="20" viewBox="0 0 20 20" style="position:absolute;left:2px;top:2px"><circle cx="10" cy="10" r="5" fill="#ff2020"/><path d="M10 0v4M10 16v4M0 10h4M16 10h4M3 3l2.800 2.800M14.200 14.200L17 17M17 3l-2.800 2.800M5.800 14.200L3 17" stroke="#ff2020" stroke-width="1.800"/></svg></span></div>
<div class="ln" style="top:230px">今日はあると便利な<span class="la" style="letter-spacing:.4px">WordPress</span>プラグインをご紹介しますね<span class="em" style="width:22px;height:24px;top:-3px"><svg width="20" height="18" viewBox="0 0 20 18" style="position:absolute;left:1px;top:3px"><g fill="none" stroke="#ff40ff" stroke-width="1.800"><path d="M5 7.500L1.500 4Q1 1.500 3.200 1.500 5 1.500 5 3.500 5 1.500 6.800 1.500 9 1.500 8.500 4z"/><path d="M15 7.500L11.500 4Q11 1.500 13.200 1.500 15 1.500 15 3.500 15 1.500 16.800 1.500 19 1.500 18.500 4z"/></g><path d="M6 11h8l-4 5z" fill="#ff40ff"/></svg></span></div>
<div class="ln" style="top:301.500px"><span class="em" style="width:22px;height:24px;top:-3px"><svg width="16" height="14" viewBox="0 0 16 14" style="position:absolute;left:4px;top:5px"><path d="M1 13V2l3.500 5L8 1l3.500 6L15 2v11z" fill="#ff8a1a"/></svg></span>第<span class="la">10</span>位 <span style="letter-spacing:2.500px">------------------</span></div>
</div></div>

<!-- palette list -->
<div id="pal" class="abs"><div class="bhead">パレット</div>
<div class="it" style="top:54px"><svg width="12" height="11" viewBox="0 0 12 11" style="margin-right:11px;position:relative;top:-3px"><path d="M1 1.500l2.200 2L1 5.500M11 1.500l-2.200 2L11 5.500M6 0v4" stroke="#ff30e8" stroke-width="1.500" fill="none"/><rect x="1.800" y="6.500" width="8.400" height="3.700" fill="none" stroke="#ff30e8" stroke-width="1.600"/></svg>携帯絵文字<svg width="13" height="13" viewBox="0 0 13 13" style="margin-left:9px;position:relative;top:-4px"><path d="M1 1l3 3M4 1L1 4M9 1l3 3M12 1L9 4" stroke="#3a3af0" stroke-width="1.400"/><circle cx="6.500" cy="9" r="2.300" fill="none" stroke="#3a3af0" stroke-width="1.600"/></svg></div>
<div class="it" style="top:90px">アップロード済み画像</div>
<div class="it" style="top:126px">共通タグ</div>
<div class="it" style="top:162px">自由項目タグ</div>
<div class="it" style="top:198px">独自タグ</div>
</div>

<!-- floating palettes -->
<div class="fp" style="left:1233px;top:273px;width:336px;height:346px"><div class="hd"><span>絵文字パレット</span><a>[×]</a></div><div class="eg"><span class="e" style="left:0px;top:0px;color:#ff0000"><svg width="18" height="18" viewBox="0 0 18 18" style="position:absolute;left:1px;top:1px"><circle cx="9" cy="9" r="4.200" fill="#ff0000"/><path d="M9 0v3.500M9 14.500V18M0 9h3.500M14.500 9H18M2.500 2.500l2.600 2.600M12.900 12.900l2.600 2.600M15.500 2.500l-2.600 2.600M5.100 12.900l-2.600 2.600" stroke="#ff0000" stroke-width="1.600"/></svg></span><span class="e" style="left:22.5px;top:0px;color:#0000ff"><svg width="18" height="18" viewBox="0 0 18 18" style="position:absolute;left:1px;top:1px"><path d="M4.500 15.500a3.500 3.500 0 0 1 0-7 3 3 0 0 1 5-1.500 3.800 3.800 0 0 1 5.500 3 2.800 2.800 0 0 1-.5 5.500z" fill="none" stroke="#0000ff" stroke-width="1.600"/></svg></span><span class="e" style="left:45px;top:0px;color:#0000ff"><svg width="18" height="18" viewBox="0 0 18 18" style="position:absolute;left:1px;top:1px"><path d="M1 9a8 7.500 0 0 1 16 0z" fill="#0000ff"/><path d="M9 1v14.500a2 2 0 0 1-4 0" fill="none" stroke="#0000ff" stroke-width="1.600"/></svg></span><span class="e" style="left:67.5px;top:0px;color:#0000ff"><svg width="18" height="18" viewBox="0 0 18 18" style="position:absolute;left:1px;top:1px"><circle cx="9" cy="5" r="3.600" fill="none" stroke="#0000ff" stroke-width="1.500"/><circle cx="9" cy="12.800" r="4.400" fill="none" stroke="#0000ff" stroke-width="1.500"/></svg></span><span class="e" style="left:90px;top:0px;color:#ff8000"><svg width="18" height="18" viewBox="0 0 18 18" style="position:absolute;left:1px;top:1px"><path d="M12 0L3 10h5l-3 8 10-11h-5.500z" fill="#ff8000"/></svg></span><span class="e" style="left:112.5px;top:0px;color:#ff0000"><svg width="18" height="18" viewBox="0 0 18 18" style="position:absolute;left:1px;top:1px"><circle cx="9" cy="9.500" r="1.800" fill="none" stroke="#ff0000" stroke-width="1.400"/><path d="M13 11a4.500 4.500 0 1 1-1-5" fill="none" stroke="#ff0000" stroke-width="1.400"/><path d="M3 15a8 8 0 1 1 12.500 0 8 8 0 0 1-5 2.500" fill="none" stroke="#ff0000" stroke-width="1.500"/></svg></span><span class="e" style="left:135px;top:0px;color:#0000ff"><svg width="18" height="18" viewBox="0 0 18 18" style="position:absolute;left:1px;top:1px"><path d="M5 1.500q3 0 4 3v3" fill="none" stroke="#0000ff" stroke-width="1.600"/><rect x="7.200" y="6" width="4" height="9" rx="2" fill="#0000ff"/><path d="M9 15v2.500" stroke="#0000ff" stroke-width="1.500"/></svg></span><span class="e" style="left:157.5px;top:0px;color:#ff0000">♈</span><span class="e" style="left:180px;top:0px;color:#ff8000">♉</span><span class="e" style="left:202.5px;top:0px;color:#00e000">♊</span><span class="e" style="left:225px;top:0px;color:#0000ff">♋</span><span class="e" style="left:247.5px;top:0px;color:#ff0000">♌</span><span class="e" style="left:270px;top:0px;color:#ff8000">♍</span><span class="e" style="left:292.5px;top:0px;color:#00e000">♎</span><span class="e" style="left:0px;top:22.5px;color:#0000ff">♏</span><span class="e" style="left:22.5px;top:22.5px;color:#ff0000">♐</span><span class="e" style="left:45px;top:22.5px;color:#ff8000">♑</span><span class="e" style="left:67.5px;top:22.5px;color:#00e000">♒</span><span class="e" style="left:90px;top:22.5px;color:#0000ff">♓</span><span class="e" style="left:112.5px;top:22.5px;color:#000">◍</span><span class="e" style="left:135px;top:22.5px;color:#0000ff">⚑</span><span class="e" style="left:157.5px;top:22.5px;color:#00e000">♀</span><span class="e" style="left:180px;top:22.5px;color:#000">❂</span><span class="e" style="left:202.5px;top:22.5px;color:#0000ff">∟</span><span class="e" style="left:225px;top:22.5px;color:#ff8000">♁</span><span class="e" style="left:247.5px;top:22.5px;color:#000">⚑</span><span class="e" style="left:270px;top:22.5px;color:#00e000">♜</span><span class="e" style="left:292.5px;top:22.5px;color:#ff8000"><span style="font:700 20px/18px 'Liberation Sans',sans-serif;letter-spacing:-.5px;">M</span></span><span class="e" style="left:0px;top:45px;color:#000"><svg width="18" height="18" viewBox="0 0 18 18" style="position:absolute;left:1px;top:1px"><path d="M0 14v-3.500l3-.8 2.500-4h7l2.500 4 3 .8V14z" fill="#000"/><circle cx="4.500" cy="14" r="2.200" fill="#000" stroke="#fff" stroke-width=".8"/><circle cx="13.500" cy="14" r="2.200" fill="#000" stroke="#fff" stroke-width=".8"/><path d="M6.500 7h2v2.500h-3.500zM9.500 7h2l1.500 2.500h-3.500z" fill="#fff"/></svg></span><span class="e" style="left:22.5px;top:45px;color:#ff0000"><svg width="18" height="18" viewBox="0 0 18 18" style="position:absolute;left:1px;top:1px"><rect x="3" y="1" width="12" height="14" rx="2" fill="#ff0000"/><rect x="5" y="3.500" width="8" height="4.500" fill="#fff"/><rect x="5" y="10.500" width="2.200" height="2" fill="#fff"/><rect x="10.800" y="10.500" width="2.200" height="2" fill="#fff"/><rect x="4" y="15" width="2.500" height="2.500" fill="#ff0000"/><rect x="11.500" y="15" width="2.500" height="2.500" fill="#ff0000"/></svg></span><span class="e" style="left:45px;top:45px;color:#0000ff"><svg width="18" height="18" viewBox="0 0 18 18" style="position:absolute;left:1px;top:1px"><path d="M0 16.500h18M3 14l2.500-5h7L15 14M7 9V4.500l6-2.500v2L9.500 5.500V9" fill="none" stroke="#0000ff" stroke-width="1.600"/><path d="M8 1h6v3H8z" fill="#0000ff"/></svg></span><span class="e" style="left:67.5px;top:45px;color:#0000ff"><svg width="18" height="18" viewBox="0 0 18 18" style="position:absolute;left:1px;top:1px"><path d="M9 0q1.500 0 1.500 3v3.500L18 11v2l-7.500-2v3.500l2.500 2V18H5v-1.500l2.500-2V11L0 13v-2l7.500-4.500V3Q7.500 0 9 0z" fill="none" stroke="#0000ff" stroke-width="1.500"/></svg></span><span class="e" style="left:90px;top:45px;color:#ff0000"><svg width="18" height="18" viewBox="0 0 18 18" style="position:absolute;left:1px;top:1px"><path d="M9 0L0 8.500h2.500V17h13V8.500H18z" fill="#ff0000"/><rect x="4.500" y="10" width="3" height="3" fill="#fff"/><rect x="10.500" y="10" width="3" height="3" fill="#fff"/></svg></span><span class="e" style="left:112.5px;top:45px;color:#0000ff"><svg width="18" height="18" viewBox="0 0 18 18" style="position:absolute;left:1px;top:1px"><rect x="2.500" y="0.500" width="13" height="17" fill="#0000ff"/><rect x="4" y="2" width="1.800" height="1.800" fill="#fff"/><rect x="7.2" y="2" width="1.800" height="1.800" fill="#fff"/><rect x="10.4" y="2" width="1.800" height="1.800" fill="#fff"/><rect x="13.6" y="2" width="1.800" height="1.800" fill="#fff"/><rect x="4" y="5" width="1.800" height="1.800" fill="#fff"/><rect x="7.2" y="5" width="1.800" height="1.800" fill="#fff"/><rect x="10.4" y="5" width="1.800" height="1.800" fill="#fff"/><rect x="13.6" y="5" width="1.800" height="1.800" fill="#fff"/><rect x="4" y="8" width="1.800" height="1.800" fill="#fff"/><rect x="7.2" y="8" width="1.800" height="1.800" fill="#fff"/><rect x="10.4" y="8" width="1.800" height="1.800" fill="#fff"/><rect x="13.6" y="8" width="1.800" height="1.800" fill="#fff"/><rect x="4" y="11" width="1.800" height="1.800" fill="#fff"/><rect x="7.2" y="11" width="1.800" height="1.800" fill="#fff"/><rect x="10.4" y="11" width="1.800" height="1.800" fill="#fff"/><rect x="13.6" y="11" width="1.800" height="1.800" fill="#fff"/><rect x="4" y="14" width="1.800" height="1.800" fill="#fff"/><rect x="7.2" y="14" width="1.800" height="1.800" fill="#fff"/><rect x="10.4" y="14" width="1.800" height="1.800" fill="#fff"/><rect x="13.6" y="14" width="1.800" height="1.800" fill="#fff"/></svg></span><span class="e" style="left:135px;top:45px;color:#ff0000"><svg width="18" height="18" viewBox="0 0 18 18" style="position:absolute;left:1px;top:1px"><rect x="2" y="3" width="14" height="14.500" rx="1.500" fill="none" stroke="#ff0000" stroke-width="1.600"/><path d="M6 1h6v2H6zM5 6.500h8M5 9.500h8M9 9.500V15" fill="none" stroke="#ff0000" stroke-width="1.700"/></svg></span><span class="e" style="left:157.5px;top:45px;color:#000"><svg width="18" height="18" viewBox="0 0 18 18" style="position:absolute;left:1px;top:1px"><rect x="2" y="3" width="14" height="14.500" rx="1.500" fill="none" stroke="#000" stroke-width="1.600"/><path d="M6 1h6v2H6z" fill="#000"/><path d="M9 6v8M5 10h8" stroke="#000" stroke-width="2.600"/></svg></span><span class="e" style="left:180px;top:45px;color:#ff00ff"><svg width="18" height="18" viewBox="0 0 18 18" style="position:absolute;left:1px;top:1px"><path d="M0 1.200h18M0 16.800h18" stroke="#ff00ff" stroke-width="1.500"/><text x="9" y="13.500" text-anchor="middle" font-family="Liberation Sans,sans-serif" font-size="12" font-weight="700" fill="#ff00ff" stroke="none" textLength="16" lengthAdjust="spacingAndGlyphs">BK</text></svg></span><span class="e" style="left:202.5px;top:45px;color:#ff0000"><svg width="18" height="18" viewBox="0 0 18 18" style="position:absolute;left:1px;top:1px"><path d="M0 1.200h18M0 16.800h18" stroke="#ff0000" stroke-width="1.500"/><text x="9" y="13.500" text-anchor="middle" font-family="Liberation Sans,sans-serif" font-size="12" font-weight="700" fill="#ff0000" stroke="none" textLength="16" lengthAdjust="spacingAndGlyphs">ATM</text></svg></span><span class="e" style="left:225px;top:45px;color:#00e000"><svg width="18" height="18" viewBox="0 0 18 18" style="position:absolute;left:1px;top:1px"><path d="M9 1L1.500 7v10.500h15V7z" fill="none" stroke="#00e000" stroke-width="1.600"/><path d="M9 1L1.500 7h15z" fill="#00e000"/><text x="9" y="15.500" text-anchor="middle" font-family="Liberation Sans,sans-serif" font-size="9" font-weight="700" fill="#00e000">H</text></svg></span><span class="e" style="left:247.5px;top:45px;color:#0000ff"><svg width="18" height="18" viewBox="0 0 18 18" style="position:absolute;left:1px;top:1px"><path d="M0 1.200h18M0 16.800h18" stroke="#0000ff" stroke-width="1.500"/><text x="9" y="13.500" text-anchor="middle" font-family="Liberation Sans,sans-serif" font-size="12" font-weight="700" fill="#0000ff" stroke="none" textLength="16" lengthAdjust="spacingAndGlyphs">CVS</text></svg></span><span class="e" style="left:270px;top:45px;color:#ff00ff"><svg width="18" height="18" viewBox="0 0 18 18" style="position:absolute;left:1px;top:1px"><path d="M0 1.200h18M0 16.800h18" stroke="#ff00ff" stroke-width="1.500"/><text x="9" y="13.500" text-anchor="middle" font-family="Liberation Sans,sans-serif" font-size="12" font-weight="700" fill="#ff00ff" stroke="none" textLength="16" lengthAdjust="spacingAndGlyphs">GS</text></svg></span><span class="e" style="left:292.5px;top:45px;color:#0000ff">Ⓟ</span><span class="e" style="left:0px;top:67.5px;color:#000">▭</span><span class="e" style="left:22.5px;top:67.5px;color:#000">♟</span><span class="e" style="left:45px;top:67.5px;color:#000">Ψ</span><span class="e" style="left:67.5px;top:67.5px;color:#00e000">☕</span><span class="e" style="left:90px;top:67.5px;color:#ff00ff">Y</span><span class="e" style="left:112.5px;top:67.5px;color:#ff8000">▯</span><span class="e" style="left:135px;top:67.5px;color:#ff8000">▬</span><span class="e" style="left:157.5px;top:67.5px;color:#ff0000">♟</span><span class="e" style="left:180px;top:67.5px;color:#0000ff">✂</span><span class="e" style="left:202.5px;top:67.5px;color:#000">♪</span><span class="e" style="left:225px;top:67.5px;color:#000">▣</span><span class="e" style="left:247.5px;top:67.5px;color:#000">↗</span><span class="e" style="left:270px;top:67.5px;color:#0000ff">◠</span><span class="e" style="left:292.5px;top:67.5px;color:#ff00ff">♫</span><span class="e" style="left:0px;top:90px;color:#000"><svg width="18" height="18" viewBox="0 0 18 18" style="position:absolute;left:1px;top:1px"><path d="M4 2h10l-1 8q4 1 5 3-2 4-9 4t-9-4q1-2 5-3z" fill="#000"/><path d="M3 13q6 3 12 0" stroke="#fff" stroke-width="1" fill="none"/></svg></span><span class="e" style="left:22.5px;top:90px;color:#ff8000"><svg width="18" height="18" viewBox="0 0 18 18" style="position:absolute;left:1px;top:1px"><rect x="0" y="4" width="18" height="10" fill="#ff8000"/><path d="M11.500 4v10" stroke="#fff" stroke-width="1.200" stroke-dasharray="2 1.500"/></svg></span><span class="e" style="left:45px;top:90px;color:#000"><svg width="18" height="18" viewBox="0 0 18 18" style="position:absolute;left:1px;top:1px"><rect x="1" y="12" width="16" height="3" fill="#000"/><rect x="12.500" y="12" width="1" height="3" fill="#fff"/><path d="M3 9q2-5 7-5t5 2" fill="none" stroke="#000" stroke-width="1.300"/></svg></span><span class="e" style="left:67.5px;top:90px;color:#ff0000"><svg width="18" height="18" viewBox="0 0 18 18" style="position:absolute;left:1px;top:1px"><circle cx="9" cy="9" r="7.800" fill="none" stroke="#ff0000" stroke-width="1.700"/><path d="M3.500 14.500l11-11" stroke="#ff0000" stroke-width="1.700"/><rect x="4" y="9.500" width="9" height="2.500" fill="#ff0000"/></svg></span><span class="e" style="left:90px;top:90px;color:#000"><svg width="18" height="18" viewBox="0 0 18 18" style="position:absolute;left:1px;top:1px"><path d="M0 4h4l1.500-2.500h7L14 4h4v13H0z" fill="#000"/><circle cx="9" cy="10.500" r="4.300" fill="none" stroke="#fff" stroke-width="1.400"/><circle cx="9" cy="10.500" r="1.600" fill="#fff"/></svg></span><span class="e" style="left:112.5px;top:90px;color:#ff0000">■</span><span class="e" style="left:0px;top:112.5px;color:#0000ff">◎</span><span class="e" style="left:22.5px;top:112.5px;color:#ff0000">♥</span><span class="e" style="left:45px;top:112.5px;color:#000">♠</span><span class="e" style="left:67.5px;top:112.5px;color:#ff0000">♦</span><span class="e" style="left:90px;top:112.5px;color:#000">♣</span><span class="e" style="left:112.5px;top:112.5px;color:#000">◔</span><span class="e" style="left:0px;top:135px;color:#000"><svg width="18" height="18" viewBox="0 0 18 18" style="position:absolute;left:1px;top:1px"><circle cx="9" cy="9" r="8" fill="#000"/><path d="M5 4a6.500 6.500 0 0 0 9 9 7 7 0 0 1-9-9z" fill="#fff"/></svg></span><span class="e" style="left:22.5px;top:135px;color:#ff8000"><svg width="18" height="18" viewBox="0 0 18 18" style="position:absolute;left:1px;top:1px"><path d="M2 1l3 4h8l3-4v7l-2.500 6-4.500 3-4.500-3L2 8z" fill="none" stroke="#ff8000" stroke-width="1.400"/><circle cx="6.500" cy="8.500" r="1" fill="#ff8000"/><circle cx="11.500" cy="8.500" r="1" fill="#ff8000"/><path d="M8 12h2l-1 1.500z" fill="#ff8000"/></svg></span><span class="e" style="left:45px;top:135px;color:#ff8000"><svg width="18" height="18" viewBox="0 0 18 18" style="position:absolute;left:1px;top:1px"><path d="M1 1l4 3h8l4-3v9q-2 6-8 6t-8-6z" fill="none" stroke="#ff8000" stroke-width="1.400"/><path d="M5 7.500h2.500M10.500 7.500H13M6 12q1.500 1.500 3 0 1.500 1.500 3 0M0 9.500h4M14 9.500h4" stroke="#ff8000" stroke-width="1.200" fill="none"/></svg></span><span class="e" style="left:67.5px;top:135px;color:#0000ff"><svg width="18" height="18" viewBox="0 0 18 18" style="position:absolute;left:1px;top:1px"><path d="M8 0v12H1zM10 3l6 9h-6z" fill="#0000ff"/><path d="M0 13.500h18l-3 4H3z" fill="#0000ff"/></svg></span><span class="e" style="left:90px;top:135px;color:#00e000"><svg width="18" height="18" viewBox="0 0 18 18" style="position:absolute;left:1px;top:1px"><path d="M9 0l4.500 5h-2.500l4 4.500h-3l4 4.500H2l4-4.500H3L7 5H4.500z" fill="#00e000"/><rect x="7.500" y="14" width="3" height="4" fill="#00e000"/></svg></span><span class="e" style="left:112.5px;top:135px;color:#000">✦</span><span class="e" style="left:0px;top:157.5px;color:#000"><span style="display:block;width:18px;height:18px;border:1.500px solid #000;border-radius:2px;-webkit-text-stroke:0;margin:1px;font:400 14px/15px 'Liberation Sans','Noto Sans CJK JP',sans-serif">1</span></span><span class="e" style="left:22.5px;top:157.5px;color:#000"><span style="display:block;width:18px;height:18px;border:1.500px solid #000;border-radius:2px;-webkit-text-stroke:0;margin:1px;font:400 14px/15px 'Liberation Sans','Noto Sans CJK JP',sans-serif">2</span></span><span class="e" style="left:45px;top:157.5px;color:#000"><span style="display:block;width:18px;height:18px;border:1.500px solid #000;border-radius:2px;-webkit-text-stroke:0;margin:1px;font:400 14px/15px 'Liberation Sans','Noto Sans CJK JP',sans-serif">3</span></span><span class="e" style="left:67.5px;top:157.5px;color:#000"><span style="display:block;width:18px;height:18px;border:1.500px solid #000;border-radius:2px;-webkit-text-stroke:0;margin:1px;font:400 14px/15px 'Liberation Sans','Noto Sans CJK JP',sans-serif">4</span></span><span class="e" style="left:90px;top:157.5px;color:#000"><span style="display:block;width:18px;height:18px;border:1.500px solid #000;border-radius:2px;-webkit-text-stroke:0;margin:1px;font:400 14px/15px 'Liberation Sans','Noto Sans CJK JP',sans-serif">5</span></span><span class="e" style="left:112.5px;top:157.5px;color:#000"><span style="display:block;width:18px;height:18px;border:1.500px solid #000;border-radius:2px;-webkit-text-stroke:0;margin:1px;font:400 14px/15px 'Liberation Sans','Noto Sans CJK JP',sans-serif">6</span></span><span class="e" style="left:0px;top:180px;color:#0000ff"><svg width="18" height="18" viewBox="0 0 18 18" style="position:absolute;left:1px;top:1px"><path d="M2 5l7-3.500L16 5M3 9l3-1.500M15 9l-3-1.500M4 15q5-4.500 10 0" fill="none" stroke="#0000ff" stroke-width="1.600"/></svg></span><span class="e" style="left:22.5px;top:180px;color:#ff0000"><svg width="18" height="18" viewBox="0 0 18 18" style="position:absolute;left:1px;top:1px"><path d="M7 1v12" stroke="#ff0000" stroke-width="2" fill="none"/><path d="M7 1.500q3 3.500 6.500 5t-1 6.500" stroke="#ff0000" stroke-width="1.700" fill="none"/><ellipse cx="4.500" cy="14" rx="3.500" ry="2.800" fill="#ff0000"/></svg></span><span class="e" style="left:45px;top:180px;color:#ff0000"><svg width="18" height="18" viewBox="0 0 18 18" style="position:absolute;left:1px;top:1px"><path d="M5.500 2q-1.500 3 0 5t0 4M9 1q-1.500 3 0 5.500t0 4.500M12.500 2q-1.500 3 0 5t0 4" fill="none" stroke="#ff0000" stroke-width="1.400"/><path d="M3 9q-3 2-1.500 5t7.500 3 7.500-3T15 9" fill="none" stroke="#ff0000" stroke-width="1.600"/></svg></span><span class="e" style="left:67.5px;top:180px;color:#ff0000"><svg width="18" height="18" viewBox="0 0 18 18" style="position:absolute;left:1px;top:1px"><path d="M0 8q3-4 6-3l3 1.500L12 5q3-1 6 3-3 1-5 3.500l-4 1.500-4-1.500Q3 9 0 8z" fill="#ff0000"/></svg></span><span class="e" style="left:90px;top:180px;color:#ff8000"><svg width="18" height="18" viewBox="0 0 18 18" style="position:absolute;left:1px;top:1px"><path d="M5 0l1.500 3.500L10 5 6.500 6.500 5 10 3.500 6.500 0 5l3.500-1.500zM13 8l1.500 3.500L18 13l-3.500 1.500L13 18l-1.500-3.500L8 13l3.500-1.500z" fill="none" stroke="#ff8000" stroke-width="1.200"/></svg></span><span class="e" style="left:112.5px;top:180px;color:#ff8000">✧</span><span class="e" style="left:0px;top:202.5px;color:#ff0000"><svg width="18" height="18" viewBox="0 0 18 18" style="position:absolute;left:1px;top:1px"><path d="M0 1.200h18M0 16.800h18" stroke="#ff0000" stroke-width="1.500"/><text x="9" y="13.500" text-anchor="middle" font-family="Liberation Sans,sans-serif" font-size="12" font-weight="700" fill="#ff0000" stroke="none" textLength="16" lengthAdjust="spacingAndGlyphs">OK</text></svg></span><span class="e" style="left:22.5px;top:202.5px;color:#0000ff"><svg width="18" height="18" viewBox="0 0 18 18" style="position:absolute;left:1px;top:1px"><path d="M1 2h5l1.500 2h3L12 2h5v5h-3v9H4V7H1z" fill="none" stroke="#0000ff" stroke-width="1.800"/><path d="M4 10.500h10" stroke="#0000ff" stroke-width="1.600"/></svg></span><span class="e" style="left:45px;top:202.5px;color:#ff0000"><svg width="18" height="18" viewBox="0 0 18 18" style="position:absolute;left:1px;top:1px"><path d="M1.500 13.500l8-8 3 3-8 8zM10.500 4.500L14 1l3 .5-.5 3.500-3 3" fill="none" stroke="#ff0000" stroke-width="1.500"/><path d="M11 4l5-3 .5 3-2.500 3z" fill="#ff0000"/></svg></span><span class="e" style="left:67.5px;top:202.5px;color:#ff8000"><svg width="18" height="18" viewBox="0 0 18 18" style="position:absolute;left:1px;top:1px"><path d="M2 9.500L11 3l5 8-11 4.500zM13 3l2.500-2M6 15l1 2.500 3-1" fill="none" stroke="#ff8000" stroke-width="1.700"/></svg></span><span class="e" style="left:90px;top:202.5px;color:#800000"><svg width="18" height="18" viewBox="0 0 18 18" style="position:absolute;left:1px;top:1px"><path d="M6 1h6l-1.500 3q6 3 6 8.500 0 5-7.500 5T1.500 12.500Q1.500 7 7.500 4z" fill="none" stroke="#800000" stroke-width="1.500"/><path d="M6 8h6M5.500 10.500h7M9 8v6.500M6.500 14.500h5" stroke="#800000" stroke-width="1.200" fill="none"/></svg></span><span class="e" style="left:112.5px;top:202.5px;color:#000">♪</span><span class="e" style="left:0px;top:225px;color:#ff00ff"><svg width="18" height="18" viewBox="0 0 18 18" style="position:absolute;left:1px;top:1px"><g fill="none" stroke="#ff00ff" stroke-width="1.500"><path d="M4.500 8L1 4.500Q.5 2 2.700 2 4.500 2 4.500 3.800 4.500 2 6.300 2 8.500 2 8 4.500z"/><path d="M13.500 8L10 4.500Q9.500 2 11.700 2 13.500 2 13.500 3.800 13.500 2 15.300 2 17.500 2 17 4.500z"/><path d="M5 11.500h8l-4 4.500z"/></g></svg></span><span class="e" style="left:22.5px;top:225px;color:#ff8000"><svg width="18" height="18" viewBox="0 0 18 18" style="position:absolute;left:1px;top:1px"><path d="M1 8.500h4V16H1zM5 9l3.500-3.500L9 1h2l.5 5H17v2.500h-1.500V11H15v2.500h-1V16H5" fill="none" stroke="#ff8000" stroke-width="1.500"/></svg></span><span class="e" style="left:45px;top:225px;color:#ff0000"><svg width="18" height="18" viewBox="0 0 18 18" style="position:absolute;left:1px;top:1px"><path d="M3 3l3 2M15 3l-3 2M2 9.500h14" fill="none" stroke="#ff0000" stroke-width="1.500"/><path d="M6.500 10v3.500a2.500 2.500 0 0 0 5 0V10z" fill="#ff0000"/></svg></span><span class="e" style="left:67.5px;top:225px;color:#ff00ff"><svg width="18" height="18" viewBox="0 0 18 18" style="position:absolute;left:1px;top:1px"><path d="M3 3v4M11 3.500l4-1.500M11 3.500l4 2M3.500 11q5.500 7 11 0" fill="none" stroke="#ff00ff" stroke-width="1.500"/></svg></span><span class="e" style="left:90px;top:225px;color:#0000ff"><svg width="18" height="18" viewBox="0 0 18 18" style="position:absolute;left:1px;top:1px"><path d="M1 2l5 3-5 2M17 2l-5 3 5 2M3.500 16q5.500-6 11 0M5 11v2M13 11v2" fill="none" stroke="#0000c0" stroke-width="1.500"/></svg></span><span class="e" style="left:112.5px;top:225px;color:#ff8000">☺</span><span class="e" style="left:0px;top:247.5px;color:#ff0000"><span style="display:block;width:18px;height:18px;border:1.500px solid #ff0000;border-radius:2px;-webkit-text-stroke:0;margin:1px;font:400 14px/15px 'Liberation Sans','Noto Sans CJK JP',sans-serif">満</span></span><span class="e" style="left:22.5px;top:247.5px;color:#00e000"><svg width="18" height="18" viewBox="0 0 18 18" style="position:absolute;left:1px;top:1px"><path d="M5 17.500V5h3V1h3v4h5v12.500z" fill="none" stroke="#00e000" stroke-width="1.600"/><path d="M1 17.500V9h4" fill="none" stroke="#00e000" stroke-width="1.600"/><rect x="7" y="7.5" width="1.600" height="1.600" fill="#00e000"/><rect x="10" y="7.5" width="1.600" height="1.600" fill="#00e000"/><rect x="13" y="7.5" width="1.600" height="1.600" fill="#00e000"/><rect x="7" y="10.5" width="1.600" height="1.600" fill="#00e000"/><rect x="10" y="10.5" width="1.600" height="1.600" fill="#00e000"/><rect x="13" y="10.5" width="1.600" height="1.600" fill="#00e000"/><rect x="7" y="13.5" width="1.600" height="1.600" fill="#00e000"/><rect x="10" y="13.5" width="1.600" height="1.600" fill="#00e000"/><rect x="13" y="13.5" width="1.600" height="1.600" fill="#00e000"/></svg></span><span class="e" style="left:45px;top:247.5px;color:#0000ff"><svg width="18" height="18" viewBox="0 0 18 18" style="position:absolute;left:1px;top:1px"><path d="M0 13q3-9 9-9-3 3-1 6 2-4 6-3-2 1-1.500 4l5.500 2v5H0z" fill="#0000ff"/><path d="M0 16.500h18" stroke="#fff" stroke-width="1" stroke-dasharray="1.500 1.500"/></svg></span><span class="e" style="left:67.5px;top:247.5px;color:#0000ff"><svg width="18" height="18" viewBox="0 0 18 18" style="position:absolute;left:1px;top:1px"><path d="M0 17L6.500 3h5L18 17z" fill="#0000ff"/><path d="M6.500 3h5l1.500 3.500-2-1-2 1.500-2-1.500-2 1z" fill="#fff" stroke="#0000ff" stroke-width="1"/></svg></span><span class="e" style="left:90px;top:247.5px;color:#00e000"><svg width="18" height="18" viewBox="0 0 18 18" style="position:absolute;left:1px;top:1px"><circle cx="5.500" cy="5.500" r="3.500" fill="#00e000"/><circle cx="12.500" cy="5.500" r="3.500" fill="#00e000"/><circle cx="5.500" cy="11.500" r="3.500" fill="#00e000"/><circle cx="12.500" cy="11.500" r="3.500" fill="#00e000"/><path d="M9 9l5 8.500" stroke="#00e000" stroke-width="1.600"/></svg></span><span class="e" style="left:112.5px;top:247.5px;color:#ff0000">❢</span><span class="e" style="left:0px;top:270px;color:#ff8000"><svg width="18" height="18" viewBox="0 0 18 18" style="position:absolute;left:1px;top:1px"><path d="M4 5a4 4 0 0 1 8 0q5 1 5 6t-6 6H7Q2 16 2 11L0 8z" fill="none" stroke="#ff8000" stroke-width="1.500"/><circle cx="6" cy="5" r=".9" fill="#ff8000"/></svg></span><span class="e" style="left:22.5px;top:270px;color:#000080"><svg width="18" height="18" viewBox="0 0 18 18" style="position:absolute;left:1px;top:1px"><path d="M9 0q5 0 5 6l3 9h-3l1 3H3l1-3H1l3-9q0-6 5-6z" fill="#000080"/><path d="M9 6q3 0 3 5t-3 6q-3-1-3-6t3-5z" fill="#fff"/><circle cx="7" cy="3.500" r=".9" fill="#fff"/></svg></span><span class="e" style="left:45px;top:270px;color:#800000"><svg width="18" height="18" viewBox="0 0 18 18" style="position:absolute;left:1px;top:1px"><path d="M3 18l1-7L1 9l5-6 1-3 2 2q6 0 8 7l-2 1-3-3-3 3 2 4-1 4" fill="none" stroke="#800000" stroke-width="1.600"/><path d="M9 2q5 1 7 6l-3-2-4-1z" fill="#800000"/></svg></span><span class="e" style="left:67.5px;top:270px;color:#ff8000"><svg width="18" height="18" viewBox="0 0 18 18" style="position:absolute;left:1px;top:1px"><path d="M2 3l3 2.500h8L16 3v5q2 2 2 4.500 0 4.500-9 4.500T0 12.500Q0 10 2 8z" fill="none" stroke="#ff8000" stroke-width="1.500"/><ellipse cx="9" cy="12" rx="3.500" ry="2.200" fill="none" stroke="#ff8000" stroke-width="1.200"/></svg></span></div></div>
<div class="fp" style="left:1359px;top:393px;width:420px;height:305px"><div class="hd"><span>アップロード済み画像パレット</span><a>[×]</a></div>
<svg class="abs" style="left:15px;top:67.500px" width="76" height="30" viewBox="0 0 76 30"><rect x="0" y="16" width="76" height="14" fill="#e6e1cc"/><ellipse cx="9" cy="9" rx="5" ry="6.500" fill="#fafafa" stroke="#333" stroke-width="1.200"/><circle cx="6.5" cy="3.5" r="1.800" fill="#222"/><circle cx="11.5" cy="3.5" r="1.800" fill="#222"/><path d="M4 10q5 -4 10 0v3h-10z" fill="#222"/><circle cx="9" cy="18" r="5.5" fill="#e8a020"/><path d="M9 18v-5.5a5.5 5.5 0 0 1 5.5 5.5z" fill="#e02020"/><path d="M9 18h-5.5a5.5 5.5 0 0 0 5.5 5.5z" fill="#2050d0"/><path d="M9 18v5.5a5.5 5.5 0 0 0 5.5 -5.5z" fill="#e02020"/><ellipse cx="23" cy="11" rx="5" ry="6.500" fill="#fafafa" stroke="#333" stroke-width="1.200"/><circle cx="20.5" cy="5.5" r="1.800" fill="#222"/><circle cx="25.5" cy="5.5" r="1.800" fill="#222"/><path d="M18 12q5 -4 10 0v3h-10z" fill="#222"/><circle cx="23" cy="20" r="5.5" fill="#30a030"/><path d="M23 20v-5.5a5.5 5.5 0 0 1 5.5 5.5z" fill="#e8d020"/><path d="M23 20h-5.5a5.5 5.5 0 0 0 5.5 5.5z" fill="#2050d0"/><path d="M23 20v5.5a5.5 5.5 0 0 0 5.5 -5.5z" fill="#30a030"/><ellipse cx="37" cy="9" rx="5" ry="6.500" fill="#fafafa" stroke="#333" stroke-width="1.200"/><circle cx="34.5" cy="3.5" r="1.800" fill="#222"/><circle cx="39.5" cy="3.5" r="1.800" fill="#222"/><path d="M32 10q5 -4 10 0v3h-10z" fill="#222"/><circle cx="37" cy="18" r="5.5" fill="#e02020"/><path d="M37 18v-5.5a5.5 5.5 0 0 1 5.5 5.5z" fill="#e88020"/><path d="M37 18h-5.5a5.5 5.5 0 0 0 5.5 5.5z" fill="#e02020"/><path d="M37 18v5.5a5.5 5.5 0 0 0 5.5 -5.5z" fill="#e8a020"/><ellipse cx="50" cy="20" rx="6" ry="4.500" fill="#fafafa" stroke="#333" stroke-width="1.200"/><circle cx="46" cy="17" r="1.800" fill="#222"/><circle cx="54" cy="17" r="1.800" fill="#222"/><path d="M47 19h6v4h-6z" fill="#222"/><circle cx="50" cy="11" r="5.5" fill="#e02020"/><path d="M50 11v-5.5a5.5 5.5 0 0 1 5.5 5.5z" fill="#30a030"/><path d="M50 11h-5.5a5.5 5.5 0 0 0 5.5 5.5z" fill="#2050d0"/><path d="M50 11v5.5a5.5 5.5 0 0 0 5.5 -5.5z" fill="#e8a020"/><ellipse cx="64" cy="19" rx="6" ry="4.500" fill="#fafafa" stroke="#333" stroke-width="1.200"/><circle cx="60" cy="16" r="1.800" fill="#222"/><circle cx="68" cy="16" r="1.800" fill="#222"/><path d="M61 18h6v4h-6z" fill="#222"/><circle cx="64" cy="10" r="5.5" fill="#30a030"/><path d="M64 10v-5.5a5.5 5.5 0 0 1 5.5 5.5z" fill="#e02020"/><path d="M64 10h-5.5a5.5 5.5 0 0 0 5.5 5.5z" fill="#e8d020"/><path d="M64 10v5.5a5.5 5.5 0 0 0 5.5 -5.5z" fill="#8050c0"/></svg>
<div class="tl" style="left:32px;top:143px;color:#222;font-size:19.500px;letter-spacing:.7px">1.jpeg</div></div>
<div class="fp" style="left:1443px;top:480px;width:261px;height:620px"><div class="hd"><span>共通タグパレット</span><a>[×]</a></div>
<div class="abs" style="left:0;top:38px;width:233px;height:600px"><div class="tl" style="left:9px;top:8px">マガジンタイトル</div><div class="ti" style="left:9px;top:41px;width:141px">%%TITLE%%</div><div class="ib" style="left:156px;top:37px">挿入</div><div class="tl" style="left:9px;top:77px">配信日</div><div class="ti" style="left:9px;top:110px;width:141px">%%DATE%%</div><div class="ib" style="left:156px;top:106px">挿入</div><div class="tl" style="left:9px;top:146px">累計号番号</div><div class="ti" style="left:9px;top:179px;width:141px">%%VOL%%</div><div class="ib" style="left:156px;top:175px">挿入</div><div class="tl" style="left:9px;top:215px">発行部数</div><div class="ti" style="left:9px;top:248px;width:141px">%%CIRC%%</div><div class="ib" style="left:156px;top:244px">挿入</div><div class="tl" style="left:9px;top:284px">送信者名</div><div class="ti" style="left:9px;top:317px;width:141px">%%FROMNAME%%</div><div class="ib" style="left:156px;top:313px">挿入</div><div class="tl" style="left:9px;top:353px">返信先アドレス</div><div class="ti" style="left:9px;top:386px;width:141px">%%REPLY%%</div><div class="ib" style="left:156px;top:382px">挿入</div><div class="tl" style="left:9px;top:422px">バックナンバーURL</div><div class="ti" style="left:9px;top:455px;width:141px">%%BCN_URL%%</div><div class="ib" style="left:156px;top:451px">挿入</div><div class="tl" style="left:9px;top:491px">1クリック解除URL</div><div class="ti" style="left:9px;top:524px;width:141px">%%ULK_URL%%</div><div class="ib" style="left:156px;top:520px">挿入</div></div>
<div class="vsb" style="left:233px;top:39px;height:600px"><i class="tri" style="left:6px;top:10px;border-bottom:6px solid #a3a3a3;border-top:0"></i><div class="abs" style="left:2px;top:22px;width:20px;height:300px;background:#c1c1c1"></div></div></div>
<div class="fp" style="left:1554px;top:595px;width:261px;height:289px"><div class="hd"><span>自由項目タグパレット</span><a>[×]</a></div>
<div class="abs" style="left:0;top:37px;width:233px;height:222px"><div class="tl" style="left:9px;top:8px">自由項目1</div><div class="ti" style="left:9px;top:41px;width:141px">%%FREE_1%%</div><div class="ib" style="left:156px;top:37px">挿入</div><div class="tl" style="left:9px;top:77px">自由項目2</div><div class="ti" style="left:9px;top:110px;width:141px">%%FREE_3%%</div><div class="ib" style="left:156px;top:106px">挿入</div><div class="tl" style="left:9px;top:146px">契約期限</div><div class="ti" style="left:9px;top:179px;width:141px">%%FREE_7%%</div><div class="ib" style="left:156px;top:175px">挿入</div></div>
<div class="vsb" style="left:233px;top:39px;height:222px"><i class="tri" style="left:6px;top:10px;border-bottom:6px solid #a3a3a3;border-top:0"></i><i class="tri" style="left:6px;top:207px;border-top:6px solid #a3a3a3;border-bottom:0"></i></div>
<div class="abs" style="left:0;top:261px;width:233px;height:24px;background:#f1f1f1"><i class="tri" style="left:9px;top:6px;border-right:6px solid #a3a3a3;border-left:0"></i><i class="tri" style="left:217px;top:6px;border-left:6px solid #a3a3a3;border-right:0"></i></div></div>

<!-- page scrollbar -->
<div id="sb" class="abs"><div class="tri" style="left:7px;top:5px;border-bottom:6px solid #a3a3a3;border-top:0"></div><div class="th"></div><div class="tri" style="left:7px;top:1065px;border-top:6px solid #505050;border-bottom:0"></div></div>
</body>
</html>
